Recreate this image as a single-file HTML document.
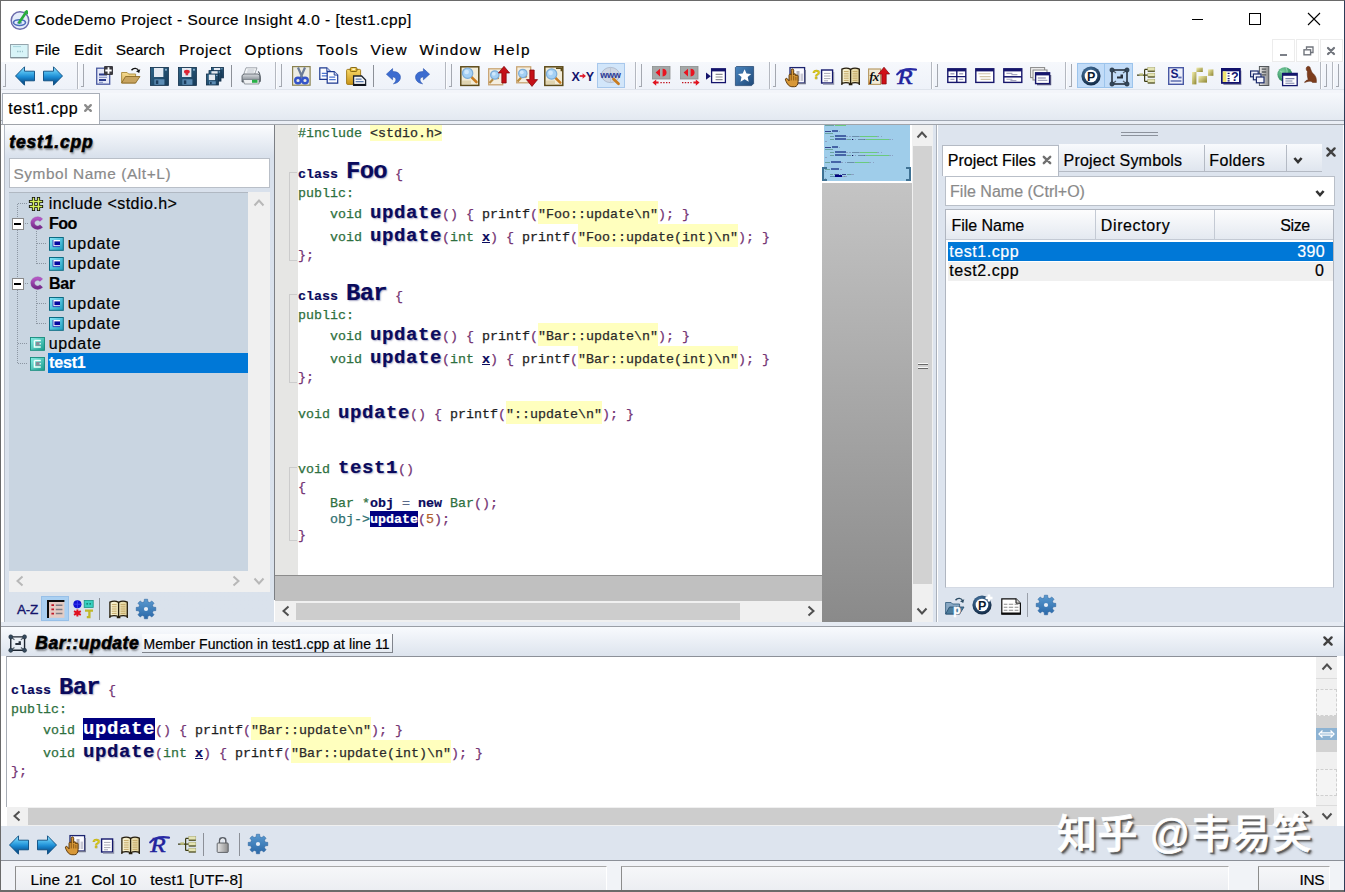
<!DOCTYPE html><html><head><meta charset="utf-8"><title>CodeDemo Project - Source Insight 4.0</title><style>
html,body{margin:0;padding:0;}
body{width:1345px;height:892px;overflow:hidden;position:relative;background:#dde4ee;font-family:"Liberation Sans",sans-serif;}
.r{position:absolute;box-sizing:border-box;}
.t{position:absolute;white-space:pre;-webkit-text-stroke:.2px currentColor;}
svg{position:absolute;overflow:visible;}
.c{position:absolute;white-space:pre;font-family:"Liberation Mono",monospace;font-size:13.33px;line-height:16px;height:16px;}
.c b{color:#0a0a5c;}
.g{color:#2e7040}.p{color:#703070}.k{color:#222}.s{color:#333;background:#ffffc4}
.n{color:#0a0a5c;font-weight:bold;text-shadow:1px 1px 1px rgba(0,0,60,.25)}
.u{text-decoration:underline;color:#0a0a5c}
</style></head><body>
<div class="r" style="left:0px;top:0px;width:1345px;height:892px;background:#fff;border:1px solid #6a6a6a;border-right-color:#2e3c58;"></div>
<div class="r" style="left:1px;top:1px;width:1343px;height:37px;background:#fff;"></div>
<span class="t" style="left:34.38px;top:10.00px;font-size:15.4px;line-height:20px;color:#000;letter-spacing:0.491px;">CodeDemo Project - Source Insight 4.0 - [test1.cpp]</span>
<div class="r" style="left:1192px;top:19px;width:11px;height:1px;background:#000;"></div>
<div class="r" style="left:1249px;top:13px;width:12px;height:12px;background:transparent;border:1px solid #000;"></div>
<svg style="left:1307px;top:12px" width="14" height="14" viewBox="0 0 14 14"><path d="M1 1L13 13M13 1L1 13" stroke="#000" stroke-width="1.1" fill="none"/></svg>
<span class="t" style="left:34.88px;top:40.30px;font-size:15.4px;line-height:20px;color:#000;letter-spacing:0.139px;">File</span>
<span class="t" style="left:73.88px;top:40.30px;font-size:15.4px;line-height:20px;color:#000;letter-spacing:0.565px;">Edit</span>
<span class="t" style="left:115.68px;top:40.30px;font-size:15.4px;line-height:20px;color:#000;letter-spacing:0.087px;">Search</span>
<span class="t" style="left:178.88px;top:40.30px;font-size:15.4px;line-height:20px;color:#000;letter-spacing:0.717px;">Project</span>
<span class="t" style="left:244.58px;top:40.30px;font-size:15.4px;line-height:20px;color:#000;letter-spacing:0.860px;">Options</span>
<span class="t" style="left:316.38px;top:40.30px;font-size:15.4px;line-height:20px;color:#000;letter-spacing:1.320px;">Tools</span>
<span class="t" style="left:370.38px;top:40.30px;font-size:15.4px;line-height:20px;color:#000;letter-spacing:1.044px;">View</span>
<span class="t" style="left:419.38px;top:40.30px;font-size:15.4px;line-height:20px;color:#000;letter-spacing:1.292px;">Window</span>
<span class="t" style="left:493.38px;top:40.30px;font-size:15.4px;line-height:20px;color:#000;letter-spacing:1.520px;">Help</span>
<div class="r" style="left:1272px;top:39px;width:23px;height:23px;background:#fff;border:1px solid #ececec;"></div>
<div class="r" style="left:1296px;top:39px;width:23px;height:23px;background:#fff;border:1px solid #ececec;"></div>
<div class="r" style="left:1320px;top:39px;width:23px;height:23px;background:#fff;border:1px solid #ececec;"></div>
<div class="r" style="left:1px;top:62px;width:1343px;height:27px;background:linear-gradient(#f6f8fc,#eef2f9);"></div>
<div class="r" style="left:1px;top:89px;width:1343px;height:1px;background:#dfe4ec;"></div>
<div class="r" style="left:1px;top:90px;width:1343px;height:3px;background:#f3f5fa;"></div>
<div class="r" style="left:1px;top:93px;width:1343px;height:27px;background:linear-gradient(#f6f8fc,#e3e9f1);"></div>
<div class="r" style="left:1px;top:120px;width:1343px;height:1px;background:#a0a7b2;"></div>
<div class="r" style="left:1px;top:121px;width:1343px;height:3px;background:#eaeef5;"></div>
<div class="r" style="left:1px;top:124px;width:1343px;height:1px;background:#a0a4aa;"></div>
<div class="r" style="left:2px;top:93px;width:98px;height:31px;background:#fff;border:1px solid #a8aeb8;border-bottom:none;"></div>
<span class="t" style="left:8.36px;top:98.30px;font-size:16px;line-height:21px;color:#000;letter-spacing:0.544px;">test1.cpp</span>
<div class="r" style="left:4px;top:125px;width:270px;height:497px;background:linear-gradient(#fbfcfe 0px,#d9e1ec 32px,#dae2ec 100%);border-left:1px solid #b4bac4;"></div>
<div class="r" style="left:274px;top:125px;width:1px;height:475px;background:#7c7f84;"></div>
<span class="t" style="left:9.30px;top:130.50px;font-size:17.5px;line-height:23px;color:#000;letter-spacing:0.821px;font-weight:bold;font-style:italic;text-shadow:1px 2px 2px rgba(0,0,0,.4);-webkit-text-stroke:.6px #000;">test1.cpp</span>
<div class="r" style="left:9px;top:158px;width:261px;height:30px;background:#fff;border:1px solid #b9bfc8;"></div>
<span class="t" style="left:13.38px;top:163.50px;font-size:15.4px;line-height:20px;color:#8a8a8a;letter-spacing:0.581px;">Symbol Name (Alt+L)</span>
<div class="r" style="left:9px;top:192px;width:239px;height:379px;background:#c9d5e1;border-top:1px solid #b0b8c2;"></div>
<div class="r" style="left:248px;top:192px;width:22px;height:400px;background:#f0f0f0;"></div>
<div class="r" style="left:9px;top:571px;width:239px;height:21px;background:#f0f0f0;"></div>
<div class="r" style="left:275px;top:125px;width:23px;height:451px;background:#e6e6e4;"></div>
<div class="r" style="left:298px;top:125px;width:524px;height:451px;background:#fff;"></div>
<div class="r" style="left:275px;top:575px;width:547px;height:1px;background:#8c8c8c;"></div>
<div class="r" style="left:275px;top:576px;width:547px;height:25px;background:#c0c0c0;"></div>
<div class="r" style="left:275px;top:601px;width:547px;height:21px;background:#f0f0f0;"></div>
<div class="r" style="left:296px;top:603px;width:444px;height:17px;background:#cdcdcd;"></div>
<div class="r" style="left:822px;top:125px;width:90px;height:497px;background:linear-gradient(#fff 0,#fff 58px,#c4c4c4 58px,#8a8a8a 100%);"></div>
<div class="r" style="left:824px;top:125px;width:86px;height:56px;background:#9fcdea;"></div>
<div class="r" style="left:912px;top:125px;width:21px;height:497px;background:#f0f0f0;"></div>
<div class="r" style="left:913px;top:146px;width:19px;height:438px;background:#d2d2d2;"></div>
<div class="r" style="left:933px;top:125px;width:4px;height:497px;background:#dde4ee;"></div>
<div class="r" style="left:936px;top:125px;width:1px;height:497px;background:#aab0ba;"></div>
<div class="r" style="left:938px;top:125px;width:405px;height:497px;background:#dde4ee;"></div>
<div class="r" style="left:945px;top:176px;width:390px;height:30px;background:#fff;border:1px solid #b9bfc8;"></div>
<div class="r" style="left:945px;top:209px;width:389px;height:379px;background:#fff;border:1px solid #b0b6c0;border-bottom-color:#d4dae4;"></div>
<div class="r" style="left:946px;top:210px;width:387px;height:30px;background:linear-gradient(#fdfdfe,#e4e9f0);border-bottom:1px solid #c4cad4;"></div>
<div class="r" style="left:948px;top:242px;width:385px;height:19px;background:#0078d7;"></div>
<div class="r" style="left:948px;top:262px;width:385px;height:19px;background:#f0f0f0;"></div>
<div class="r" style="left:1px;top:622px;width:1343px;height:4px;background:#e6ebf3;"></div>
<div class="r" style="left:1px;top:626px;width:1343px;height:1px;background:#9a9ea6;"></div>
<div class="r" style="left:1px;top:627px;width:1343px;height:29px;background:linear-gradient(#f8fafd,#dde4ee);"></div>
<div class="r" style="left:6px;top:656px;width:1310px;height:151px;background:#fff;border-top:1px solid #8c9098;border-left:1px solid #a8adb5;"></div>
<div class="r" style="left:1316px;top:656px;width:21px;height:170px;background:#f0f0f0;border-top:1px solid #8c9098;"></div>
<div class="r" style="left:1316px;top:678px;width:21px;height:1px;background:#dcdcdc;"></div>
<div class="r" style="left:1316px;top:805px;width:21px;height:1px;background:#dcdcdc;"></div>
<div class="r" style="left:7px;top:807px;width:1309px;height:19px;background:#f0f0f0;"></div>
<div class="r" style="left:28px;top:808px;width:1246px;height:17px;background:#cdcdcd;"></div>
<div class="r" style="left:1px;top:826px;width:1343px;height:34px;background:#dde4ee;"></div>
<div class="r" style="left:1px;top:860px;width:1343px;height:1px;background:#8c9098;"></div>
<div class="r" style="left:1px;top:861px;width:1343px;height:30px;background:#f1f3f7;"></div>
<span class="t" style="left:298.00px;top:125.00px;font-size:13.33px;line-height:17px;color:#2e7040;font-family:'Liberation Mono',monospace;-webkit-text-stroke:.25px currentColor;">#include</span>
<div class="r" style="left:370px;top:125px;width:72px;height:16px;background:#ffffbe;"></div>
<span class="t" style="left:370.00px;top:125.00px;font-size:13.33px;line-height:17px;color:#2a2a2a;font-family:'Liberation Mono',monospace;-webkit-text-stroke:.25px currentColor;">&lt;stdio.h&gt;</span>
<span class="t" style="left:298.00px;top:166.00px;font-size:13.33px;line-height:17px;color:#0a0a5c;font-weight:bold;font-family:'Liberation Mono',monospace;">class</span>
<span class="t" style="left:346.00px;top:156.00px;font-size:24.0px;line-height:31px;color:#0a0a5c;font-weight:bold;font-family:'Liberation Mono',monospace;letter-spacing:-0.730px;text-shadow:1px 1px 1.5px rgba(10,10,90,.35);">Foo</span>
<span class="t" style="left:395.01px;top:166.00px;font-size:13.33px;line-height:17px;color:#743474;font-family:'Liberation Mono',monospace;-webkit-text-stroke:.25px currentColor;">{</span>
<span class="t" style="left:298.00px;top:185.00px;font-size:13.33px;line-height:17px;color:#2e7040;font-family:'Liberation Mono',monospace;-webkit-text-stroke:.25px currentColor;">public:</span>
<span class="t" style="left:330.00px;top:206.00px;font-size:13.33px;line-height:17px;color:#2e7040;font-family:'Liberation Mono',monospace;-webkit-text-stroke:.25px currentColor;">void</span>
<span class="t" style="left:370.00px;top:200.50px;font-size:19.0px;line-height:25px;color:#0a0a5c;font-weight:bold;font-family:'Liberation Mono',monospace;letter-spacing:0.600px;text-shadow:1px 1px 1.5px rgba(10,10,90,.35);">update</span>
<span class="t" style="left:442.00px;top:206.00px;font-size:13.33px;line-height:17px;color:#743474;font-family:'Liberation Mono',monospace;-webkit-text-stroke:.25px currentColor;">()</span>
<span class="t" style="left:466.00px;top:206.00px;font-size:13.33px;line-height:17px;color:#743474;font-family:'Liberation Mono',monospace;-webkit-text-stroke:.25px currentColor;">{</span>
<span class="t" style="left:482.00px;top:206.00px;font-size:13.33px;line-height:17px;color:#1e1e1e;font-family:'Liberation Mono',monospace;-webkit-text-stroke:.25px currentColor;">printf</span>
<span class="t" style="left:530.00px;top:206.00px;font-size:13.33px;line-height:17px;color:#743474;font-family:'Liberation Mono',monospace;-webkit-text-stroke:.25px currentColor;">(</span>
<div class="r" style="left:538px;top:201px;width:120px;height:23px;background:#ffffbe;"></div>
<span class="t" style="left:538.00px;top:206.00px;font-size:13.33px;line-height:17px;color:#2a2a2a;font-family:'Liberation Mono',monospace;-webkit-text-stroke:.25px currentColor;">"Foo::update\n"</span>
<span class="t" style="left:658.00px;top:206.00px;font-size:13.33px;line-height:17px;color:#743474;font-family:'Liberation Mono',monospace;-webkit-text-stroke:.25px currentColor;">);</span>
<span class="t" style="left:682.00px;top:206.00px;font-size:13.33px;line-height:17px;color:#743474;font-family:'Liberation Mono',monospace;-webkit-text-stroke:.25px currentColor;">}</span>
<span class="t" style="left:330.00px;top:229.00px;font-size:13.33px;line-height:17px;color:#2e7040;font-family:'Liberation Mono',monospace;-webkit-text-stroke:.25px currentColor;">void</span>
<span class="t" style="left:370.00px;top:223.50px;font-size:19.0px;line-height:25px;color:#0a0a5c;font-weight:bold;font-family:'Liberation Mono',monospace;letter-spacing:0.600px;text-shadow:1px 1px 1.5px rgba(10,10,90,.35);">update</span>
<span class="t" style="left:442.00px;top:229.00px;font-size:13.33px;line-height:17px;color:#743474;font-family:'Liberation Mono',monospace;-webkit-text-stroke:.25px currentColor;">(</span>
<span class="t" style="left:450.00px;top:229.00px;font-size:13.33px;line-height:17px;color:#2e7040;font-family:'Liberation Mono',monospace;-webkit-text-stroke:.25px currentColor;">int</span>
<span class="t" style="left:482.00px;top:229.00px;font-size:13.33px;line-height:17px;color:#0a0a5c;font-weight:bold;font-family:'Liberation Mono',monospace;text-decoration:underline;">x</span>
<span class="t" style="left:490.00px;top:229.00px;font-size:13.33px;line-height:17px;color:#743474;font-family:'Liberation Mono',monospace;-webkit-text-stroke:.25px currentColor;">)</span>
<span class="t" style="left:506.00px;top:229.00px;font-size:13.33px;line-height:17px;color:#743474;font-family:'Liberation Mono',monospace;-webkit-text-stroke:.25px currentColor;">{</span>
<span class="t" style="left:522.00px;top:229.00px;font-size:13.33px;line-height:17px;color:#1e1e1e;font-family:'Liberation Mono',monospace;-webkit-text-stroke:.25px currentColor;">printf</span>
<span class="t" style="left:570.00px;top:229.00px;font-size:13.33px;line-height:17px;color:#743474;font-family:'Liberation Mono',monospace;-webkit-text-stroke:.25px currentColor;">(</span>
<div class="r" style="left:578px;top:224px;width:160px;height:23px;background:#ffffbe;"></div>
<span class="t" style="left:578.00px;top:229.00px;font-size:13.33px;line-height:17px;color:#2a2a2a;font-family:'Liberation Mono',monospace;-webkit-text-stroke:.25px currentColor;">"Foo::update(int)\n"</span>
<span class="t" style="left:738.00px;top:229.00px;font-size:13.33px;line-height:17px;color:#743474;font-family:'Liberation Mono',monospace;-webkit-text-stroke:.25px currentColor;">);</span>
<span class="t" style="left:762.00px;top:229.00px;font-size:13.33px;line-height:17px;color:#743474;font-family:'Liberation Mono',monospace;-webkit-text-stroke:.25px currentColor;">}</span>
<span class="t" style="left:298.00px;top:247.00px;font-size:13.33px;line-height:17px;color:#743474;font-family:'Liberation Mono',monospace;-webkit-text-stroke:.25px currentColor;">};</span>
<span class="t" style="left:298.00px;top:288.00px;font-size:13.33px;line-height:17px;color:#0a0a5c;font-weight:bold;font-family:'Liberation Mono',monospace;">class</span>
<span class="t" style="left:346.00px;top:278.00px;font-size:24.0px;line-height:31px;color:#0a0a5c;font-weight:bold;font-family:'Liberation Mono',monospace;letter-spacing:-0.730px;text-shadow:1px 1px 1.5px rgba(10,10,90,.35);">Bar</span>
<span class="t" style="left:395.01px;top:288.00px;font-size:13.33px;line-height:17px;color:#743474;font-family:'Liberation Mono',monospace;-webkit-text-stroke:.25px currentColor;">{</span>
<span class="t" style="left:298.00px;top:307.00px;font-size:13.33px;line-height:17px;color:#2e7040;font-family:'Liberation Mono',monospace;-webkit-text-stroke:.25px currentColor;">public:</span>
<span class="t" style="left:330.00px;top:328.00px;font-size:13.33px;line-height:17px;color:#2e7040;font-family:'Liberation Mono',monospace;-webkit-text-stroke:.25px currentColor;">void</span>
<span class="t" style="left:370.00px;top:322.50px;font-size:19.0px;line-height:25px;color:#0a0a5c;font-weight:bold;font-family:'Liberation Mono',monospace;letter-spacing:0.600px;text-shadow:1px 1px 1.5px rgba(10,10,90,.35);">update</span>
<span class="t" style="left:442.00px;top:328.00px;font-size:13.33px;line-height:17px;color:#743474;font-family:'Liberation Mono',monospace;-webkit-text-stroke:.25px currentColor;">()</span>
<span class="t" style="left:466.00px;top:328.00px;font-size:13.33px;line-height:17px;color:#743474;font-family:'Liberation Mono',monospace;-webkit-text-stroke:.25px currentColor;">{</span>
<span class="t" style="left:482.00px;top:328.00px;font-size:13.33px;line-height:17px;color:#1e1e1e;font-family:'Liberation Mono',monospace;-webkit-text-stroke:.25px currentColor;">printf</span>
<span class="t" style="left:530.00px;top:328.00px;font-size:13.33px;line-height:17px;color:#743474;font-family:'Liberation Mono',monospace;-webkit-text-stroke:.25px currentColor;">(</span>
<div class="r" style="left:538px;top:323px;width:120px;height:23px;background:#ffffbe;"></div>
<span class="t" style="left:538.00px;top:328.00px;font-size:13.33px;line-height:17px;color:#2a2a2a;font-family:'Liberation Mono',monospace;-webkit-text-stroke:.25px currentColor;">"Bar::update\n"</span>
<span class="t" style="left:658.00px;top:328.00px;font-size:13.33px;line-height:17px;color:#743474;font-family:'Liberation Mono',monospace;-webkit-text-stroke:.25px currentColor;">);</span>
<span class="t" style="left:682.00px;top:328.00px;font-size:13.33px;line-height:17px;color:#743474;font-family:'Liberation Mono',monospace;-webkit-text-stroke:.25px currentColor;">}</span>
<span class="t" style="left:330.00px;top:351.00px;font-size:13.33px;line-height:17px;color:#2e7040;font-family:'Liberation Mono',monospace;-webkit-text-stroke:.25px currentColor;">void</span>
<span class="t" style="left:370.00px;top:345.50px;font-size:19.0px;line-height:25px;color:#0a0a5c;font-weight:bold;font-family:'Liberation Mono',monospace;letter-spacing:0.600px;text-shadow:1px 1px 1.5px rgba(10,10,90,.35);">update</span>
<span class="t" style="left:442.00px;top:351.00px;font-size:13.33px;line-height:17px;color:#743474;font-family:'Liberation Mono',monospace;-webkit-text-stroke:.25px currentColor;">(</span>
<span class="t" style="left:450.00px;top:351.00px;font-size:13.33px;line-height:17px;color:#2e7040;font-family:'Liberation Mono',monospace;-webkit-text-stroke:.25px currentColor;">int</span>
<span class="t" style="left:482.00px;top:351.00px;font-size:13.33px;line-height:17px;color:#0a0a5c;font-weight:bold;font-family:'Liberation Mono',monospace;text-decoration:underline;">x</span>
<span class="t" style="left:490.00px;top:351.00px;font-size:13.33px;line-height:17px;color:#743474;font-family:'Liberation Mono',monospace;-webkit-text-stroke:.25px currentColor;">)</span>
<span class="t" style="left:506.00px;top:351.00px;font-size:13.33px;line-height:17px;color:#743474;font-family:'Liberation Mono',monospace;-webkit-text-stroke:.25px currentColor;">{</span>
<span class="t" style="left:522.00px;top:351.00px;font-size:13.33px;line-height:17px;color:#1e1e1e;font-family:'Liberation Mono',monospace;-webkit-text-stroke:.25px currentColor;">printf</span>
<span class="t" style="left:570.00px;top:351.00px;font-size:13.33px;line-height:17px;color:#743474;font-family:'Liberation Mono',monospace;-webkit-text-stroke:.25px currentColor;">(</span>
<div class="r" style="left:578px;top:346px;width:160px;height:23px;background:#ffffbe;"></div>
<span class="t" style="left:578.00px;top:351.00px;font-size:13.33px;line-height:17px;color:#2a2a2a;font-family:'Liberation Mono',monospace;-webkit-text-stroke:.25px currentColor;">"Bar::update(int)\n"</span>
<span class="t" style="left:738.00px;top:351.00px;font-size:13.33px;line-height:17px;color:#743474;font-family:'Liberation Mono',monospace;-webkit-text-stroke:.25px currentColor;">);</span>
<span class="t" style="left:762.00px;top:351.00px;font-size:13.33px;line-height:17px;color:#743474;font-family:'Liberation Mono',monospace;-webkit-text-stroke:.25px currentColor;">}</span>
<span class="t" style="left:298.00px;top:369.00px;font-size:13.33px;line-height:17px;color:#743474;font-family:'Liberation Mono',monospace;-webkit-text-stroke:.25px currentColor;">};</span>
<span class="t" style="left:298.00px;top:406.00px;font-size:13.33px;line-height:17px;color:#2e7040;font-family:'Liberation Mono',monospace;-webkit-text-stroke:.25px currentColor;">void</span>
<span class="t" style="left:338.00px;top:400.50px;font-size:19.0px;line-height:25px;color:#0a0a5c;font-weight:bold;font-family:'Liberation Mono',monospace;letter-spacing:0.600px;text-shadow:1px 1px 1.5px rgba(10,10,90,.35);">update</span>
<span class="t" style="left:410.00px;top:406.00px;font-size:13.33px;line-height:17px;color:#743474;font-family:'Liberation Mono',monospace;-webkit-text-stroke:.25px currentColor;">()</span>
<span class="t" style="left:434.00px;top:406.00px;font-size:13.33px;line-height:17px;color:#743474;font-family:'Liberation Mono',monospace;-webkit-text-stroke:.25px currentColor;">{</span>
<span class="t" style="left:450.00px;top:406.00px;font-size:13.33px;line-height:17px;color:#1e1e1e;font-family:'Liberation Mono',monospace;-webkit-text-stroke:.25px currentColor;">printf</span>
<span class="t" style="left:498.00px;top:406.00px;font-size:13.33px;line-height:17px;color:#743474;font-family:'Liberation Mono',monospace;-webkit-text-stroke:.25px currentColor;">(</span>
<div class="r" style="left:506px;top:401px;width:96px;height:23px;background:#ffffbe;"></div>
<span class="t" style="left:506.00px;top:406.00px;font-size:13.33px;line-height:17px;color:#2a2a2a;font-family:'Liberation Mono',monospace;-webkit-text-stroke:.25px currentColor;">"::update\n"</span>
<span class="t" style="left:602.00px;top:406.00px;font-size:13.33px;line-height:17px;color:#743474;font-family:'Liberation Mono',monospace;-webkit-text-stroke:.25px currentColor;">);</span>
<span class="t" style="left:626.00px;top:406.00px;font-size:13.33px;line-height:17px;color:#743474;font-family:'Liberation Mono',monospace;-webkit-text-stroke:.25px currentColor;">}</span>
<span class="t" style="left:298.00px;top:461.00px;font-size:13.33px;line-height:17px;color:#2e7040;font-family:'Liberation Mono',monospace;-webkit-text-stroke:.25px currentColor;">void</span>
<span class="t" style="left:338.00px;top:455.50px;font-size:19.0px;line-height:25px;color:#0a0a5c;font-weight:bold;font-family:'Liberation Mono',monospace;letter-spacing:0.600px;text-shadow:1px 1px 1.5px rgba(10,10,90,.35);">test1</span>
<span class="t" style="left:398.00px;top:461.00px;font-size:13.33px;line-height:17px;color:#743474;font-family:'Liberation Mono',monospace;-webkit-text-stroke:.25px currentColor;">()</span>
<span class="t" style="left:298.00px;top:479.00px;font-size:13.33px;line-height:17px;color:#743474;font-family:'Liberation Mono',monospace;-webkit-text-stroke:.25px currentColor;">{</span>
<span class="t" style="left:330.00px;top:495.00px;font-size:13.33px;line-height:17px;color:#2e7040;font-family:'Liberation Mono',monospace;-webkit-text-stroke:.25px currentColor;">Bar</span>
<span class="t" style="left:362.00px;top:495.00px;font-size:13.33px;line-height:17px;color:#2e7040;font-family:'Liberation Mono',monospace;-webkit-text-stroke:.25px currentColor;">*</span>
<span class="t" style="left:370.00px;top:495.00px;font-size:13.33px;line-height:17px;color:#0a0a5c;font-weight:bold;font-family:'Liberation Mono',monospace;">obj</span>
<span class="t" style="left:402.00px;top:495.00px;font-size:13.33px;line-height:17px;color:#5a6a8a;font-family:'Liberation Mono',monospace;-webkit-text-stroke:.25px currentColor;">=</span>
<span class="t" style="left:418.00px;top:495.00px;font-size:13.33px;line-height:17px;color:#0a0a5c;font-weight:bold;font-family:'Liberation Mono',monospace;">new</span>
<span class="t" style="left:450.00px;top:495.00px;font-size:13.33px;line-height:17px;color:#2e7040;font-family:'Liberation Mono',monospace;-webkit-text-stroke:.25px currentColor;">Bar</span>
<span class="t" style="left:474.00px;top:495.00px;font-size:13.33px;line-height:17px;color:#743474;font-family:'Liberation Mono',monospace;-webkit-text-stroke:.25px currentColor;">();</span>
<span class="t" style="left:330.00px;top:511.00px;font-size:13.33px;line-height:17px;color:#2e7070;font-family:'Liberation Mono',monospace;-webkit-text-stroke:.25px currentColor;">obj-&gt;</span>
<div class="r" style="left:370px;top:511px;width:48px;height:16px;background:#000080;"></div>
<span class="t" style="left:370.00px;top:511.00px;font-size:13.33px;line-height:17px;color:#fff;font-weight:bold;font-family:'Liberation Mono',monospace;">update</span>
<span class="t" style="left:418.00px;top:511.00px;font-size:13.33px;line-height:17px;color:#743474;font-family:'Liberation Mono',monospace;-webkit-text-stroke:.25px currentColor;">(</span>
<span class="t" style="left:426.00px;top:511.00px;font-size:13.33px;line-height:17px;color:#b0602a;font-family:'Liberation Mono',monospace;-webkit-text-stroke:.25px currentColor;">5</span>
<span class="t" style="left:434.00px;top:511.00px;font-size:13.33px;line-height:17px;color:#743474;font-family:'Liberation Mono',monospace;-webkit-text-stroke:.25px currentColor;">);</span>
<span class="t" style="left:298.00px;top:527.00px;font-size:13.33px;line-height:17px;color:#743474;font-family:'Liberation Mono',monospace;-webkit-text-stroke:.25px currentColor;">}</span>
<div class="r" style="left:825.0px;top:125.2px;width:9.3px;height:1px;background:rgba(40,110,70,.45);"></div>
<div class="r" style="left:835.4px;top:125.2px;width:10.4px;height:1px;background:rgba(90,200,90,.75);"></div>
<div class="r" style="left:825.0px;top:130.6px;width:5.8px;height:1px;background:rgba(10,10,100,.7);"></div>
<div class="r" style="left:832.0px;top:129.6px;width:5.9px;height:2px;background:rgba(10,30,120,.6);"></div>
<div class="r" style="left:839.1px;top:130.6px;width:1.2px;height:1px;background:rgba(90,60,110,.3);"></div>
<div class="r" style="left:825.0px;top:133.0px;width:8.1px;height:1px;background:rgba(40,110,70,.45);"></div>
<div class="r" style="left:829.6px;top:135.8px;width:4.6px;height:1px;background:rgba(40,110,70,.45);"></div>
<div class="r" style="left:835.4px;top:134.8px;width:10.4px;height:2px;background:rgba(10,30,120,.6);"></div>
<div class="r" style="left:845.9px;top:135.8px;width:2.3px;height:1px;background:rgba(90,60,110,.3);"></div>
<div class="r" style="left:849.4px;top:135.8px;width:1.2px;height:1px;background:rgba(90,60,110,.3);"></div>
<div class="r" style="left:851.7px;top:135.8px;width:7.0px;height:1px;background:rgba(30,50,80,.4);"></div>
<div class="r" style="left:858.6px;top:135.8px;width:1.2px;height:1px;background:rgba(90,60,110,.3);"></div>
<div class="r" style="left:859.8px;top:135.8px;width:17.4px;height:1px;background:rgba(90,200,90,.75);"></div>
<div class="r" style="left:877.2px;top:135.8px;width:2.3px;height:1px;background:rgba(90,60,110,.3);"></div>
<div class="r" style="left:880.7px;top:135.8px;width:1.2px;height:1px;background:rgba(90,60,110,.3);"></div>
<div class="r" style="left:829.6px;top:138.8px;width:4.6px;height:1px;background:rgba(40,110,70,.45);"></div>
<div class="r" style="left:835.4px;top:137.8px;width:10.4px;height:2px;background:rgba(10,30,120,.6);"></div>
<div class="r" style="left:845.9px;top:138.8px;width:1.2px;height:1px;background:rgba(90,60,110,.3);"></div>
<div class="r" style="left:847.0px;top:138.8px;width:3.5px;height:1px;background:rgba(40,110,70,.45);"></div>
<div class="r" style="left:851.7px;top:138.8px;width:1.2px;height:1px;background:#0a0a5c;"></div>
<div class="r" style="left:852.8px;top:138.8px;width:1.2px;height:1px;background:rgba(90,60,110,.3);"></div>
<div class="r" style="left:855.2px;top:138.8px;width:1.2px;height:1px;background:rgba(90,60,110,.3);"></div>
<div class="r" style="left:857.5px;top:138.8px;width:7.0px;height:1px;background:rgba(30,50,80,.4);"></div>
<div class="r" style="left:864.4px;top:138.8px;width:1.2px;height:1px;background:rgba(90,60,110,.3);"></div>
<div class="r" style="left:865.6px;top:138.8px;width:23.2px;height:1px;background:rgba(90,200,90,.75);"></div>
<div class="r" style="left:888.8px;top:138.8px;width:2.3px;height:1px;background:rgba(90,60,110,.3);"></div>
<div class="r" style="left:892.3px;top:138.8px;width:1.2px;height:1px;background:rgba(90,60,110,.3);"></div>
<div class="r" style="left:825.0px;top:141.1px;width:2.3px;height:1px;background:rgba(90,60,110,.3);"></div>
<div class="r" style="left:825.0px;top:146.5px;width:5.8px;height:1px;background:rgba(10,10,100,.7);"></div>
<div class="r" style="left:832.0px;top:145.5px;width:5.9px;height:2px;background:rgba(10,30,120,.6);"></div>
<div class="r" style="left:839.1px;top:146.5px;width:1.2px;height:1px;background:rgba(90,60,110,.3);"></div>
<div class="r" style="left:825.0px;top:149.0px;width:8.1px;height:1px;background:rgba(40,110,70,.45);"></div>
<div class="r" style="left:829.6px;top:151.7px;width:4.6px;height:1px;background:rgba(40,110,70,.45);"></div>
<div class="r" style="left:835.4px;top:150.7px;width:10.4px;height:2px;background:rgba(10,30,120,.6);"></div>
<div class="r" style="left:845.9px;top:151.7px;width:2.3px;height:1px;background:rgba(90,60,110,.3);"></div>
<div class="r" style="left:849.4px;top:151.7px;width:1.2px;height:1px;background:rgba(90,60,110,.3);"></div>
<div class="r" style="left:851.7px;top:151.7px;width:7.0px;height:1px;background:rgba(30,50,80,.4);"></div>
<div class="r" style="left:858.6px;top:151.7px;width:1.2px;height:1px;background:rgba(90,60,110,.3);"></div>
<div class="r" style="left:859.8px;top:151.7px;width:17.4px;height:1px;background:rgba(90,200,90,.75);"></div>
<div class="r" style="left:877.2px;top:151.7px;width:2.3px;height:1px;background:rgba(90,60,110,.3);"></div>
<div class="r" style="left:880.7px;top:151.7px;width:1.2px;height:1px;background:rgba(90,60,110,.3);"></div>
<div class="r" style="left:829.6px;top:154.7px;width:4.6px;height:1px;background:rgba(40,110,70,.45);"></div>
<div class="r" style="left:835.4px;top:153.7px;width:10.4px;height:2px;background:rgba(10,30,120,.6);"></div>
<div class="r" style="left:845.9px;top:154.7px;width:1.2px;height:1px;background:rgba(90,60,110,.3);"></div>
<div class="r" style="left:847.0px;top:154.7px;width:3.5px;height:1px;background:rgba(40,110,70,.45);"></div>
<div class="r" style="left:851.7px;top:154.7px;width:1.2px;height:1px;background:#0a0a5c;"></div>
<div class="r" style="left:852.8px;top:154.7px;width:1.2px;height:1px;background:rgba(90,60,110,.3);"></div>
<div class="r" style="left:855.2px;top:154.7px;width:1.2px;height:1px;background:rgba(90,60,110,.3);"></div>
<div class="r" style="left:857.5px;top:154.7px;width:7.0px;height:1px;background:rgba(30,50,80,.4);"></div>
<div class="r" style="left:864.4px;top:154.7px;width:1.2px;height:1px;background:rgba(90,60,110,.3);"></div>
<div class="r" style="left:865.6px;top:154.7px;width:23.2px;height:1px;background:rgba(90,200,90,.75);"></div>
<div class="r" style="left:888.8px;top:154.7px;width:2.3px;height:1px;background:rgba(90,60,110,.3);"></div>
<div class="r" style="left:892.3px;top:154.7px;width:1.2px;height:1px;background:rgba(90,60,110,.3);"></div>
<div class="r" style="left:825.0px;top:157.1px;width:2.3px;height:1px;background:rgba(90,60,110,.3);"></div>
<div class="r" style="left:825.0px;top:161.9px;width:4.6px;height:1px;background:rgba(40,110,70,.45);"></div>
<div class="r" style="left:830.8px;top:160.9px;width:10.4px;height:2px;background:rgba(10,30,120,.6);"></div>
<div class="r" style="left:841.2px;top:161.9px;width:2.3px;height:1px;background:rgba(90,60,110,.3);"></div>
<div class="r" style="left:844.7px;top:161.9px;width:1.2px;height:1px;background:rgba(90,60,110,.3);"></div>
<div class="r" style="left:847.0px;top:161.9px;width:7.0px;height:1px;background:rgba(30,50,80,.4);"></div>
<div class="r" style="left:854.0px;top:161.9px;width:1.2px;height:1px;background:rgba(90,60,110,.3);"></div>
<div class="r" style="left:855.2px;top:161.9px;width:13.9px;height:1px;background:rgba(90,200,90,.75);"></div>
<div class="r" style="left:869.1px;top:161.9px;width:2.3px;height:1px;background:rgba(90,60,110,.3);"></div>
<div class="r" style="left:872.6px;top:161.9px;width:1.2px;height:1px;background:rgba(90,60,110,.3);"></div>
<div class="r" style="left:825.0px;top:169.1px;width:4.6px;height:1px;background:rgba(40,110,70,.45);"></div>
<div class="r" style="left:830.8px;top:168.1px;width:8.7px;height:2px;background:rgba(10,30,120,.6);"></div>
<div class="r" style="left:839.5px;top:169.1px;width:2.3px;height:1px;background:rgba(90,60,110,.3);"></div>
<div class="r" style="left:825.0px;top:171.4px;width:1.2px;height:1px;background:rgba(90,60,110,.3);"></div>
<div class="r" style="left:829.6px;top:173.5px;width:3.5px;height:1px;background:rgba(40,110,70,.45);"></div>
<div class="r" style="left:834.3px;top:173.5px;width:1.2px;height:1px;background:rgba(40,110,70,.45);"></div>
<div class="r" style="left:835.4px;top:173.5px;width:3.5px;height:1px;background:rgba(10,10,100,.7);"></div>
<div class="r" style="left:840.1px;top:173.5px;width:1.2px;height:1px;background:rgba(60,80,110,.4);"></div>
<div class="r" style="left:842.4px;top:173.5px;width:3.5px;height:1px;background:rgba(10,10,100,.7);"></div>
<div class="r" style="left:847.0px;top:173.5px;width:3.5px;height:1px;background:rgba(40,110,70,.45);"></div>
<div class="r" style="left:850.5px;top:173.5px;width:3.5px;height:1px;background:rgba(90,60,110,.3);"></div>
<div class="r" style="left:829.6px;top:175.6px;width:5.8px;height:1px;background:rgba(30,80,110,.5);"></div>
<div class="r" style="left:835.4px;top:174.6px;width:7.0px;height:2px;background:#000080;"></div>
<div class="r" style="left:842.4px;top:175.6px;width:1.2px;height:1px;background:rgba(90,60,110,.3);"></div>
<div class="r" style="left:843.6px;top:175.6px;width:1.2px;height:1px;background:rgba(120,80,60,.5);"></div>
<div class="r" style="left:844.7px;top:175.6px;width:2.3px;height:1px;background:rgba(90,60,110,.3);"></div>
<div class="r" style="left:825.0px;top:177.7px;width:1.2px;height:1px;background:rgba(90,60,110,.3);"></div>
<div class="r" style="left:289px;top:172px;width:1px;height:88px;background:#cccccc;"></div>
<div class="r" style="left:289px;top:172px;width:8px;height:1px;background:#cccccc;"></div>
<div class="r" style="left:289px;top:260px;width:8px;height:1px;background:#cccccc;"></div>
<div class="r" style="left:289px;top:294px;width:1px;height:88px;background:#cccccc;"></div>
<div class="r" style="left:289px;top:294px;width:8px;height:1px;background:#cccccc;"></div>
<div class="r" style="left:289px;top:382px;width:8px;height:1px;background:#cccccc;"></div>
<div class="r" style="left:289px;top:467px;width:1px;height:73px;background:#cccccc;"></div>
<div class="r" style="left:289px;top:467px;width:8px;height:1px;background:#cccccc;"></div>
<div class="r" style="left:289px;top:540px;width:8px;height:1px;background:#cccccc;"></div>
<span class="t" style="left:11.00px;top:682.00px;font-size:13.33px;line-height:17px;color:#0a0a5c;font-weight:bold;font-family:'Liberation Mono',monospace;">class</span>
<span class="t" style="left:59.00px;top:672.00px;font-size:24.0px;line-height:31px;color:#0a0a5c;font-weight:bold;font-family:'Liberation Mono',monospace;letter-spacing:-0.730px;text-shadow:1px 1px 1.5px rgba(10,10,90,.35);">Bar</span>
<span class="t" style="left:108.01px;top:682.00px;font-size:13.33px;line-height:17px;color:#743474;font-family:'Liberation Mono',monospace;-webkit-text-stroke:.25px currentColor;">{</span>
<span class="t" style="left:11.00px;top:701.00px;font-size:13.33px;line-height:17px;color:#2e7040;font-family:'Liberation Mono',monospace;-webkit-text-stroke:.25px currentColor;">public:</span>
<span class="t" style="left:43.00px;top:722.00px;font-size:13.33px;line-height:17px;color:#2e7040;font-family:'Liberation Mono',monospace;-webkit-text-stroke:.25px currentColor;">void</span>
<div class="r" style="left:83px;top:718px;width:72px;height:22px;background:#000080;"></div>
<span class="t" style="left:83.00px;top:716.50px;font-size:19.0px;line-height:25px;color:#fff;font-weight:bold;font-family:'Liberation Mono',monospace;letter-spacing:0.600px;">update</span>
<span class="t" style="left:155.00px;top:722.00px;font-size:13.33px;line-height:17px;color:#743474;font-family:'Liberation Mono',monospace;-webkit-text-stroke:.25px currentColor;">()</span>
<span class="t" style="left:179.00px;top:722.00px;font-size:13.33px;line-height:17px;color:#743474;font-family:'Liberation Mono',monospace;-webkit-text-stroke:.25px currentColor;">{</span>
<span class="t" style="left:195.00px;top:722.00px;font-size:13.33px;line-height:17px;color:#1e1e1e;font-family:'Liberation Mono',monospace;-webkit-text-stroke:.25px currentColor;">printf</span>
<span class="t" style="left:243.00px;top:722.00px;font-size:13.33px;line-height:17px;color:#743474;font-family:'Liberation Mono',monospace;-webkit-text-stroke:.25px currentColor;">(</span>
<div class="r" style="left:251px;top:717px;width:120px;height:23px;background:#ffffbe;"></div>
<span class="t" style="left:251.00px;top:722.00px;font-size:13.33px;line-height:17px;color:#2a2a2a;font-family:'Liberation Mono',monospace;-webkit-text-stroke:.25px currentColor;">"Bar::update\n"</span>
<span class="t" style="left:371.00px;top:722.00px;font-size:13.33px;line-height:17px;color:#743474;font-family:'Liberation Mono',monospace;-webkit-text-stroke:.25px currentColor;">);</span>
<span class="t" style="left:395.00px;top:722.00px;font-size:13.33px;line-height:17px;color:#743474;font-family:'Liberation Mono',monospace;-webkit-text-stroke:.25px currentColor;">}</span>
<span class="t" style="left:43.00px;top:745.00px;font-size:13.33px;line-height:17px;color:#2e7040;font-family:'Liberation Mono',monospace;-webkit-text-stroke:.25px currentColor;">void</span>
<span class="t" style="left:83.00px;top:739.50px;font-size:19.0px;line-height:25px;color:#0a0a5c;font-weight:bold;font-family:'Liberation Mono',monospace;letter-spacing:0.600px;text-shadow:1px 1px 1.5px rgba(10,10,90,.35);">update</span>
<span class="t" style="left:155.00px;top:745.00px;font-size:13.33px;line-height:17px;color:#743474;font-family:'Liberation Mono',monospace;-webkit-text-stroke:.25px currentColor;">(</span>
<span class="t" style="left:163.00px;top:745.00px;font-size:13.33px;line-height:17px;color:#2e7040;font-family:'Liberation Mono',monospace;-webkit-text-stroke:.25px currentColor;">int</span>
<span class="t" style="left:195.00px;top:745.00px;font-size:13.33px;line-height:17px;color:#0a0a5c;font-weight:bold;font-family:'Liberation Mono',monospace;text-decoration:underline;">x</span>
<span class="t" style="left:203.00px;top:745.00px;font-size:13.33px;line-height:17px;color:#743474;font-family:'Liberation Mono',monospace;-webkit-text-stroke:.25px currentColor;">)</span>
<span class="t" style="left:219.00px;top:745.00px;font-size:13.33px;line-height:17px;color:#743474;font-family:'Liberation Mono',monospace;-webkit-text-stroke:.25px currentColor;">{</span>
<span class="t" style="left:235.00px;top:745.00px;font-size:13.33px;line-height:17px;color:#1e1e1e;font-family:'Liberation Mono',monospace;-webkit-text-stroke:.25px currentColor;">printf</span>
<span class="t" style="left:283.00px;top:745.00px;font-size:13.33px;line-height:17px;color:#743474;font-family:'Liberation Mono',monospace;-webkit-text-stroke:.25px currentColor;">(</span>
<div class="r" style="left:291px;top:740px;width:160px;height:23px;background:#ffffbe;"></div>
<span class="t" style="left:291.00px;top:745.00px;font-size:13.33px;line-height:17px;color:#2a2a2a;font-family:'Liberation Mono',monospace;-webkit-text-stroke:.25px currentColor;">"Bar::update(int)\n"</span>
<span class="t" style="left:451.00px;top:745.00px;font-size:13.33px;line-height:17px;color:#743474;font-family:'Liberation Mono',monospace;-webkit-text-stroke:.25px currentColor;">);</span>
<span class="t" style="left:475.00px;top:745.00px;font-size:13.33px;line-height:17px;color:#743474;font-family:'Liberation Mono',monospace;-webkit-text-stroke:.25px currentColor;">}</span>
<span class="t" style="left:11.00px;top:763.00px;font-size:13.33px;line-height:17px;color:#743474;font-family:'Liberation Mono',monospace;-webkit-text-stroke:.25px currentColor;">};</span>
<div class="r" style="left:48px;top:353px;width:200px;height:20px;background:#0078d7;"></div>
<span class="t" style="left:48.66px;top:192.50px;font-size:16px;line-height:21px;color:#000;letter-spacing:0.456px;">include &lt;stdio.h&gt;</span>
<span class="t" style="left:48.96px;top:212.50px;font-size:16px;line-height:21px;color:#000;letter-spacing:-0.520px;font-weight:bold;">Foo</span>
<span class="t" style="left:67.76px;top:232.50px;font-size:16px;line-height:21px;color:#000;letter-spacing:0.668px;">update</span>
<span class="t" style="left:67.76px;top:252.50px;font-size:16px;line-height:21px;color:#000;letter-spacing:0.668px;">update</span>
<span class="t" style="left:48.96px;top:272.50px;font-size:16px;line-height:21px;color:#000;letter-spacing:-0.200px;font-weight:bold;">Bar</span>
<span class="t" style="left:67.76px;top:292.50px;font-size:16px;line-height:21px;color:#000;letter-spacing:0.668px;">update</span>
<span class="t" style="left:67.76px;top:312.50px;font-size:16px;line-height:21px;color:#000;letter-spacing:0.668px;">update</span>
<span class="t" style="left:48.66px;top:332.50px;font-size:16px;line-height:21px;color:#000;letter-spacing:0.668px;">update</span>
<span class="t" style="left:48.96px;top:352.00px;font-size:16px;line-height:21px;color:#fff;letter-spacing:-0.143px;font-weight:bold;">test1</span>
<div class="r" style="left:17px;top:203px;width:1px;height:160px;background:repeating-linear-gradient(0deg,#8c96a2 0 1px,transparent 1px 2px);"></div>
<div class="r" style="left:18px;top:203px;width:10px;height:1px;background:repeating-linear-gradient(90deg,#8c96a2 0 1px,transparent 1px 2px);"></div>
<div class="r" style="left:18px;top:343px;width:10px;height:1px;background:repeating-linear-gradient(90deg,#8c96a2 0 1px,transparent 1px 2px);"></div>
<div class="r" style="left:18px;top:363px;width:10px;height:1px;background:repeating-linear-gradient(90deg,#8c96a2 0 1px,transparent 1px 2px);"></div>
<div class="r" style="left:36px;top:230px;width:1px;height:34px;background:repeating-linear-gradient(0deg,#8c96a2 0 1px,transparent 1px 2px);"></div>
<div class="r" style="left:37px;top:243px;width:10px;height:1px;background:repeating-linear-gradient(90deg,#8c96a2 0 1px,transparent 1px 2px);"></div>
<div class="r" style="left:37px;top:263px;width:10px;height:1px;background:repeating-linear-gradient(90deg,#8c96a2 0 1px,transparent 1px 2px);"></div>
<div class="r" style="left:36px;top:290px;width:1px;height:34px;background:repeating-linear-gradient(0deg,#8c96a2 0 1px,transparent 1px 2px);"></div>
<div class="r" style="left:37px;top:303px;width:10px;height:1px;background:repeating-linear-gradient(90deg,#8c96a2 0 1px,transparent 1px 2px);"></div>
<div class="r" style="left:37px;top:323px;width:10px;height:1px;background:repeating-linear-gradient(90deg,#8c96a2 0 1px,transparent 1px 2px);"></div>
<div class="r" style="left:23px;top:223px;width:5px;height:1px;background:repeating-linear-gradient(90deg,#8c96a2 0 1px,transparent 1px 2px);"></div>
<div class="r" style="left:23px;top:283px;width:5px;height:1px;background:repeating-linear-gradient(90deg,#8c96a2 0 1px,transparent 1px 2px);"></div>
<div class="r" style="left:11.5px;top:217.5px;width:12px;height:12px;background:#fff;border:1.5px solid #8a8a8a;"></div>
<div class="r" style="left:14px;top:222.5px;width:7px;height:2px;background:#000;"></div>
<div class="r" style="left:11.5px;top:277.5px;width:12px;height:12px;background:#fff;border:1.5px solid #8a8a8a;"></div>
<div class="r" style="left:14px;top:282.5px;width:7px;height:2px;background:#000;"></div>
<svg style="left:259px;top:203px" width="1" height="1"><path d="M-4.5 2.5L0 -2.5L4.5 2.5" stroke="#b8b8b8" stroke-width="2.0" fill="none"/></svg>
<svg style="left:259px;top:581px" width="1" height="1"><path d="M-4.5 -2.5L0 2.5L4.5 -2.5" stroke="#b8b8b8" stroke-width="2.0" fill="none"/></svg>
<svg style="left:20px;top:581px" width="1" height="1"><path d="M2.5 -4.5L-2.5 0L2.5 4.5" stroke="#b8b8b8" stroke-width="2.0" fill="none"/></svg>
<svg style="left:236px;top:581px" width="1" height="1"><path d="M-2.5 -4.5L2.5 0L-2.5 4.5" stroke="#b8b8b8" stroke-width="2.0" fill="none"/></svg>
<svg style="left:285.5px;top:611px" width="1" height="1"><path d="M2.5 -4.5L-2.5 0L2.5 4.5" stroke="#505050" stroke-width="2.0" fill="none"/></svg>
<svg style="left:811px;top:611px" width="1" height="1"><path d="M-2.5 -4.5L2.5 0L-2.5 4.5" stroke="#505050" stroke-width="2.0" fill="none"/></svg>
<svg style="left:922px;top:135px" width="1" height="1"><path d="M-4.5 2.5L0 -2.5L4.5 2.5" stroke="#505050" stroke-width="2.0" fill="none"/></svg>
<svg style="left:922px;top:611px" width="1" height="1"><path d="M-4.5 -2.5L0 2.5L4.5 -2.5" stroke="#505050" stroke-width="2.0" fill="none"/></svg>
<div class="r" style="left:918px;top:363px;width:10px;height:1px;background:#f8f8f8;"></div>
<div class="r" style="left:918px;top:364px;width:10px;height:1px;background:#686868;"></div>
<div class="r" style="left:918px;top:367px;width:10px;height:1px;background:#f8f8f8;"></div>
<div class="r" style="left:918px;top:368px;width:10px;height:1px;background:#686868;"></div>
<div class="r" style="left:822px;top:167px;width:5px;height:14px;background:transparent;border:2px solid #3f7294;border-right:none;"></div>
<div class="r" style="left:906px;top:167px;width:5px;height:14px;background:transparent;border:2px solid #3f7294;border-left:none;"></div>
<div class="r" style="left:1121px;top:132px;width:37px;height:1px;background:#8c929c;"></div>
<div class="r" style="left:1121px;top:135px;width:37px;height:1px;background:#8c929c;"></div>
<div class="r" style="left:1059px;top:144px;width:263px;height:28px;background:linear-gradient(#f8fafd,#dfe5ee);border-bottom:1px solid #b4bac4;"></div>
<div class="r" style="left:1204px;top:145px;width:1px;height:27px;background:#b4bac4;"></div>
<div class="r" style="left:1286px;top:145px;width:1px;height:27px;background:#b4bac4;"></div>
<div class="r" style="left:942px;top:145px;width:117px;height:31px;background:#fff;border:1px solid #b4bac4;border-bottom:none;"></div>
<span class="t" style="left:947.86px;top:150.00px;font-size:16px;line-height:21px;color:#000;letter-spacing:-0.020px;">Project Files</span>
<span class="t" style="left:1063.56px;top:150.00px;font-size:16px;line-height:21px;color:#000;letter-spacing:0.213px;">Project Symbols</span>
<span class="t" style="left:1209.36px;top:150.00px;font-size:16px;line-height:21px;color:#000;letter-spacing:0.321px;">Folders</span>
<span class="t" style="left:950.06px;top:181.00px;font-size:16px;line-height:21px;color:#8a8a8a;letter-spacing:0.012px;">File Name (Ctrl+O)</span>
<div class="r" style="left:1095px;top:210px;width:1px;height:30px;background:#c4cad4;"></div>
<div class="r" style="left:1214px;top:210px;width:1px;height:30px;background:#c4cad4;"></div>
<span class="t" style="left:951.56px;top:215.00px;font-size:16px;line-height:21px;color:#000;letter-spacing:-0.041px;">File Name</span>
<span class="t" style="left:1100.86px;top:215.00px;font-size:16px;line-height:21px;color:#000;letter-spacing:0.596px;">Directory</span>
<span class="t" style="left:1280.36px;top:215.00px;font-size:16px;line-height:21px;color:#000;letter-spacing:-0.448px;">Size</span>
<span class="t" style="left:949.36px;top:240.50px;font-size:16px;line-height:21px;color:#fff;letter-spacing:0.544px;">test1.cpp</span>
<span class="t" style="left:1297.16px;top:240.50px;font-size:16px;line-height:21px;color:#fff;letter-spacing:0.392px;">390</span>
<span class="t" style="left:949.36px;top:260.00px;font-size:16px;line-height:21px;color:#000;letter-spacing:0.544px;">test2.cpp</span>
<span class="t" style="left:1315.00px;top:260.00px;font-size:16px;line-height:21px;color:#000;">0</span>
<svg style="left:1046.5px;top:160px" width="1" height="1"><path d="M-3.2 -3.2L3.2 3.2M3.2 -3.2L-3.2 3.2" stroke="#707070" stroke-width="2.4" stroke-linecap="round" fill="none"/></svg>
<svg style="left:1330.5px;top:151.5px" width="1" height="1"><path d="M-3.6 -3.6L3.6 3.6M3.6 -3.6L-3.6 3.6" stroke="#404040" stroke-width="2.4" stroke-linecap="round" fill="none"/></svg>
<svg style="left:1298px;top:159.5px" width="1" height="1"><path d="M-3.6 -2.0L0 2.0L3.6 -2.0" stroke="#333" stroke-width="2.6" fill="none"/></svg>
<svg style="left:1320px;top:192.5px" width="1" height="1"><path d="M-3.6 -2.0L0 2.0L3.6 -2.0" stroke="#333" stroke-width="2.6" fill="none"/></svg>
<div class="r" style="left:1027px;top:593px;width:1px;height:24px;background:#9aa0aa;"></div>
<span class="t" style="left:35.30px;top:631.50px;font-size:17.5px;line-height:23px;color:#000;letter-spacing:0.520px;font-weight:bold;font-style:italic;text-shadow:1px 2px 2px rgba(0,0,0,.4);-webkit-text-stroke:.6px #000;">Bar::update</span>
<div class="r" style="left:142px;top:634px;width:251px;height:19px;background:linear-gradient(rgba(255,255,255,.7),rgba(255,255,255,.15));border:1px solid #80848c;border-left:none;border-top:none;"></div>
<span class="t" style="left:143.44px;top:635.00px;font-size:14px;line-height:18px;color:#000;letter-spacing:0.053px;">Member Function in test1.cpp at line 11</span>
<svg style="left:1327.5px;top:640.5px" width="1" height="1"><path d="M-3.6 -3.6L3.6 3.6M3.6 -3.6L-3.6 3.6" stroke="#404040" stroke-width="2.4" stroke-linecap="round" fill="none"/></svg>
<svg style="left:87.7px;top:108.3px" width="1" height="1"><path d="M-2.8 -2.8L2.8 2.8M2.8 -2.8L-2.8 2.8" stroke="#8c8c8c" stroke-width="2.4" stroke-linecap="round" fill="none"/></svg>
<svg style="left:1327px;top:667px" width="1" height="1"><path d="M-4.5 2.5L0 -2.5L4.5 2.5" stroke="#505050" stroke-width="2.0" fill="none"/></svg>
<svg style="left:1327px;top:816px" width="1" height="1"><path d="M-4.5 -2.5L0 2.5L4.5 -2.5" stroke="#505050" stroke-width="2.0" fill="none"/></svg>
<svg style="left:17px;top:816px" width="1" height="1"><path d="M2.5 -4.5L-2.5 0L2.5 4.5" stroke="#505050" stroke-width="2.0" fill="none"/></svg>
<svg style="left:1305px;top:816px" width="1" height="1"><path d="M-2.5 -4.5L2.5 0L-2.5 4.5" stroke="#505050" stroke-width="2.0" fill="none"/></svg>
<div class="r" style="left:1316px;top:689px;width:21px;height:27px;background:#f4f4f4;border:1px dashed #d0d0d0;"></div>
<div class="r" style="left:1316px;top:769px;width:21px;height:27px;background:#f4f4f4;border:1px dashed #d0d0d0;"></div>
<div class="r" style="left:1316px;top:716px;width:21px;height:36px;background:#d2d2d2;"></div>
<div class="r" style="left:1316px;top:728px;width:21px;height:12px;background:#8db3d3;"></div>
<svg style="left:1317px;top:728px" width="19" height="12"><path d="M4 4.800h11M4 7.200h11M5.500 2.500L2 6l3.500 3.500M13.500 2.500L17 6l-3.500 3.500" stroke="#fff" stroke-width="1.300" fill="none"/></svg>
<span class="t" style="left:1057px;top:806px;font-size:40px;line-height:56px;color:#fff;font-family:'Liberation Sans','Noto Sans CJK SC',sans-serif;font-weight:500;-webkit-text-stroke:.7px #fff;text-shadow:2px 2px 1px rgba(80,80,80,.85),3px 3px 2px rgba(90,90,90,.5);letter-spacing:0.5px">知乎 @韦易笑</span>
<div class="r" style="left:15px;top:866px;width:592px;height:24px;background:linear-gradient(#f6f7f9,#eceef2);border-left:1px solid #8c8c8c;border-top:1px solid #a8a8a8;border-right:1px solid #fff;"></div>
<div class="r" style="left:621px;top:866px;width:608px;height:24px;background:linear-gradient(#f6f7f9,#eceef2);border-left:1px solid #8c8c8c;border-top:1px solid #a8a8a8;border-right:1px solid #fff;"></div>
<div class="r" style="left:1258px;top:866px;width:72px;height:24px;background:linear-gradient(#f6f7f9,#eceef2);border-left:1px solid #8c8c8c;border-top:1px solid #a8a8a8;border-right:1px solid #fff;"></div>
<div class="r" style="left:1px;top:890px;width:1343px;height:2px;background:#6a6a6a;"></div>
<span class="t" style="left:30.38px;top:869.50px;font-size:15.4px;line-height:20px;color:#000;letter-spacing:0.198px;">Line 21  Col 10   test1 [UTF-8]</span>
<span class="t" style="left:1299.38px;top:869.50px;font-size:15.4px;line-height:20px;color:#000;letter-spacing:-0.220px;">INS</span>
<svg width="0" height="0" style="left:0;top:0"><defs>
<linearGradient id="gA" x1="0" y1="0" x2="0" y2="1"><stop offset="0" stop-color="#9ce4fc"/><stop offset=".3" stop-color="#4cb8ec"/><stop offset=".55" stop-color="#1c8cd4"/><stop offset=".8" stop-color="#0c5c9c"/><stop offset="1" stop-color="#0a4c88"/></linearGradient>
<linearGradient id="gFl" x1="0" y1="0" x2="1" y2="1"><stop offset="0" stop-color="#2e6488"/><stop offset="1" stop-color="#173a58"/></linearGradient>
<linearGradient id="gFo" x1="0" y1="0" x2="0" y2="1"><stop offset="0" stop-color="#f6dc90"/><stop offset="1" stop-color="#d8b060"/></linearGradient>
<linearGradient id="gCy" x1="0" y1="0" x2="1" y2="1"><stop offset="0" stop-color="#8ae8f8"/><stop offset="1" stop-color="#1c9cc0"/></linearGradient>
<linearGradient id="gTe" x1="0" y1="0" x2="1" y2="1"><stop offset="0" stop-color="#8af0e8"/><stop offset="1" stop-color="#189c8c"/></linearGradient>
<linearGradient id="gPu" x1="0" y1="0" x2="0" y2="1"><stop offset="0" stop-color="#c868d8"/><stop offset="1" stop-color="#7c3090"/></linearGradient>
<linearGradient id="gSt" x1="0" y1="0" x2="1" y2="1"><stop offset="0" stop-color="#4a86c0"/><stop offset="1" stop-color="#1e4878"/></linearGradient>
<linearGradient id="gBk" x1="0" y1="0" x2="1" y2="0"><stop offset="0" stop-color="#fbf6d8"/><stop offset="1" stop-color="#e0d098"/></linearGradient>
<linearGradient id="gGe" x1="0" y1="0" x2="0" y2="1"><stop offset="0" stop-color="#5a9ad0"/><stop offset="1" stop-color="#2a68a8"/></linearGradient>
<linearGradient id="gYb" x1="0" y1="0" x2="1" y2="1"><stop offset="0" stop-color="#f4f0b0"/><stop offset="1" stop-color="#8c8430"/></linearGradient>
<radialGradient id="gGl" cx=".35" cy=".3" r=".8"><stop offset="0" stop-color="#7ad0a0"/><stop offset="1" stop-color="#1e7a4c"/></radialGradient>
<radialGradient id="gPc" cx=".4" cy=".3" r=".8"><stop offset="0" stop-color="#4a7aa8"/><stop offset="1" stop-color="#0c2038"/></radialGradient>
<linearGradient id="gPr" x1="0" y1="0" x2="0" y2="1"><stop offset="0" stop-color="#d8dce0"/><stop offset="1" stop-color="#707880"/></linearGradient>
<linearGradient id="gLk" x1="0" y1="0" x2="1" y2="0"><stop offset="0" stop-color="#e8e8e8"/><stop offset="1" stop-color="#8c8c8c"/></linearGradient>
<linearGradient id="gCb" x1="0" y1="0" x2="0" y2="1"><stop offset="0" stop-color="#f8d868"/><stop offset="1" stop-color="#c89418"/></linearGradient>
</defs></svg>
<svg style="left:10px;top:9.5px" width="24" height="24"><circle cx="10" cy="10.500" r="8.800" fill="#e4ecfa" stroke="#6c6cac" stroke-width="1.500"/><ellipse cx="9.500" cy="12.600" rx="6" ry="2.900" fill="none" stroke="#4c6cbc" stroke-width="1.600"/><ellipse cx="9.500" cy="12.800" rx="2.600" ry="1.200" fill="#7c9cd8"/><path d="M9.200 12.400L16.600 1.400" stroke="#28ac3c" stroke-width="2.600" stroke-linecap="round"/><path d="M14 1.200h4v3.600Z" fill="#28ac3c"/></svg>
<svg style="left:9.5px;top:44px" width="24" height="24"><rect x=".5" y=".5" width="17.600" height="13" fill="#d8f4f8" stroke="#94a4ac" stroke-width="1"/><path d="M.5 13.800h17.600" stroke="#7c8c94" stroke-width="1.200"/><path d="M3 2.600h8" stroke="#a8d4dc" stroke-width="1"/><path d="M7 7.500h6" stroke="#9cc4cc" stroke-width="1.400" stroke-dasharray="1.500 1"/></svg>
<div class="r" style="left:5px;top:64px;width:1px;height:23px;background:#a4a8b0;"></div>
<div class="r" style="left:3px;top:86px;width:3px;height:1px;background:#a4a8b0;"></div>
<div class="r" style="left:83px;top:64px;width:1px;height:23px;background:#a4a8b0;"></div>
<div class="r" style="left:81px;top:86px;width:3px;height:1px;background:#a4a8b0;"></div>
<div class="r" style="left:281px;top:64px;width:1px;height:23px;background:#a4a8b0;"></div>
<div class="r" style="left:279px;top:86px;width:3px;height:1px;background:#a4a8b0;"></div>
<div class="r" style="left:451px;top:64px;width:1px;height:23px;background:#a4a8b0;"></div>
<div class="r" style="left:449px;top:86px;width:3px;height:1px;background:#a4a8b0;"></div>
<div class="r" style="left:641px;top:64px;width:1px;height:23px;background:#a4a8b0;"></div>
<div class="r" style="left:639px;top:86px;width:3px;height:1px;background:#a4a8b0;"></div>
<div class="r" style="left:775px;top:64px;width:1px;height:23px;background:#a4a8b0;"></div>
<div class="r" style="left:773px;top:86px;width:3px;height:1px;background:#a4a8b0;"></div>
<div class="r" style="left:937px;top:64px;width:1px;height:23px;background:#a4a8b0;"></div>
<div class="r" style="left:935px;top:86px;width:3px;height:1px;background:#a4a8b0;"></div>
<div class="r" style="left:1071px;top:64px;width:1px;height:23px;background:#a4a8b0;"></div>
<div class="r" style="left:1069px;top:86px;width:3px;height:1px;background:#a4a8b0;"></div>
<div class="r" style="left:1326px;top:64px;width:1px;height:23px;background:#a4a8b0;"></div>
<div class="r" style="left:1324px;top:86px;width:3px;height:1px;background:#a4a8b0;"></div>
<div class="r" style="left:1338px;top:64px;width:1px;height:23px;background:#a4a8b0;"></div>
<div class="r" style="left:1336px;top:86px;width:3px;height:1px;background:#a4a8b0;"></div>
<div class="r" style="left:77px;top:62px;width:1px;height:27px;background:#b4b8c0;"></div>
<div class="r" style="left:78px;top:62px;width:1px;height:27px;background:#fbfcfe;"></div>
<div class="r" style="left:275px;top:62px;width:1px;height:27px;background:#b4b8c0;"></div>
<div class="r" style="left:276px;top:62px;width:1px;height:27px;background:#fbfcfe;"></div>
<div class="r" style="left:445px;top:62px;width:1px;height:27px;background:#b4b8c0;"></div>
<div class="r" style="left:446px;top:62px;width:1px;height:27px;background:#fbfcfe;"></div>
<div class="r" style="left:635px;top:62px;width:1px;height:27px;background:#b4b8c0;"></div>
<div class="r" style="left:636px;top:62px;width:1px;height:27px;background:#fbfcfe;"></div>
<div class="r" style="left:769px;top:62px;width:1px;height:27px;background:#b4b8c0;"></div>
<div class="r" style="left:770px;top:62px;width:1px;height:27px;background:#fbfcfe;"></div>
<div class="r" style="left:931px;top:62px;width:1px;height:27px;background:#b4b8c0;"></div>
<div class="r" style="left:932px;top:62px;width:1px;height:27px;background:#fbfcfe;"></div>
<div class="r" style="left:1065px;top:62px;width:1px;height:27px;background:#b4b8c0;"></div>
<div class="r" style="left:1066px;top:62px;width:1px;height:27px;background:#fbfcfe;"></div>
<div class="r" style="left:1320px;top:62px;width:1px;height:27px;background:#b4b8c0;"></div>
<div class="r" style="left:1321px;top:62px;width:1px;height:27px;background:#fbfcfe;"></div>
<div class="r" style="left:1332px;top:62px;width:1px;height:27px;background:#b4b8c0;"></div>
<div class="r" style="left:1333px;top:62px;width:1px;height:27px;background:#fbfcfe;"></div>
<div class="r" style="left:231px;top:65px;width:1px;height:22px;background:#8c9098;"></div>
<div class="r" style="left:373px;top:65px;width:1px;height:22px;background:#8c9098;"></div>
<svg style="left:15px;top:66px" width="24" height="24"><path d="M0.5 10L9.5 0.8V5.2H19.5V14.8H9.5V19.2Z" fill="url(#gA)" stroke="#0a4c80" stroke-width=".9" stroke-linejoin="round"/></svg>
<svg style="left:43px;top:66px" width="24" height="24"><path d="M19.5 10L10.5 0.8V5.2H0.5V14.8H10.5V19.2Z" fill="url(#gA)" stroke="#0a4c80" stroke-width=".9" stroke-linejoin="round"/></svg>
<svg style="left:96px;top:66.3px" width="24" height="24"><rect x=".7" y="2.2" width="13" height="16" fill="#e6eaf8" stroke="#4a5aa0" stroke-width="1.3"/><path d="M3 8.5h8M3 14h7" stroke="#2a3a8a" stroke-width="1.8"/><path d="M3 11.3h8M3 16.3h4" stroke="#7a8ac0" stroke-width="1"/><rect x="8" y="0" width="9" height="9" rx="1" fill="#3a3a40"/><path d="M12.5 1.3v6.4M9.3 4.5h6.4" stroke="#fff" stroke-width="1.8"/></svg>
<svg style="left:121px;top:66.5px" width="24" height="24"><path d="M.6 5.5h5.5l1.5 1.5h7V16H.6Z" fill="url(#gFo)" stroke="#a88838" stroke-width=".9"/><path d="M.6 16L4.5 9.5H19L14.6 16Z" fill="#c8a460" stroke="#8c6c28" stroke-width=".9"/><path d="M10.5 3.2C12.5 .6 16.5 .8 17.8 4" fill="none" stroke="#111" stroke-width="1.4"/><path d="M19.3 2.2L18.2 6L15 4.3Z" fill="#111"/></svg>
<svg style="left:150px;top:67px" width="24" height="24"><rect x="0.4" y="0.4" width="18" height="18" fill="url(#gFl)" stroke="#12304c" stroke-width=".8"/><rect x="4.0" y="1.0" width="9.36" height="9.0" fill="#e4eaf2"/><rect x="4.36" y="12.280000000000001" width="10.080000000000002" height="5.5200000000000005" fill="#5c8cb4"/><rect x="5.8" y="13.36" width="2.5200000000000005" height="3.6" fill="#1c3c5c"/><rect x="15.16" y="1.8399999999999999" width="1.6199999999999999" height="1.8" fill="#9cc0dc"/></svg>
<svg style="left:178px;top:67px" width="24" height="24"><rect x="0.4" y="0.4" width="18" height="18" fill="url(#gFl)" stroke="#12304c" stroke-width=".8"/><rect x="4.0" y="1.0" width="9.36" height="9.0" fill="#e4eaf2"/><rect x="4.36" y="12.280000000000001" width="10.080000000000002" height="5.5200000000000005" fill="#5c8cb4"/><rect x="5.8" y="13.36" width="2.5200000000000005" height="3.6" fill="#1c3c5c"/><rect x="15.16" y="1.8399999999999999" width="1.6199999999999999" height="1.8" fill="#9cc0dc"/><ellipse cx="8.86" cy="4.720000000000001" rx="2.88" ry="1.98" fill="#e02030"/><rect x="7.6000000000000005" y="5.440000000000001" width="2.5200000000000005" height="2.88" fill="#d83040"/></svg>
<svg style="left:206px;top:67px" width="24" height="24"><rect x="5.5" y="0.4" width="12" height="10.5" fill="url(#gFl)" stroke="#12304c" stroke-width=".8"/><rect x="7.9" y="1.0" width="6.24" height="5.25" fill="#e4eaf2"/><rect x="8.14" y="7.330000000000001" width="6.720000000000001" height="2.97" fill="#5c8cb4"/><rect x="9.1" y="7.96" width="1.6800000000000002" height="2.1" fill="#1c3c5c"/><rect x="15.34" y="1.24" width="1.08" height="1.05" fill="#9cc0dc"/><rect x="3" y="3.6" width="12" height="10.5" fill="url(#gFl)" stroke="#12304c" stroke-width=".8"/><rect x="5.4" y="4.2" width="6.24" height="5.25" fill="#e4eaf2"/><rect x="5.640000000000001" y="10.530000000000001" width="6.720000000000001" height="2.97" fill="#5c8cb4"/><rect x="6.6" y="11.16" width="1.6800000000000002" height="2.1" fill="#1c3c5c"/><rect x="12.84" y="4.44" width="1.08" height="1.05" fill="#9cc0dc"/><rect x="0.4" y="7" width="12" height="11" fill="url(#gFl)" stroke="#12304c" stroke-width=".8"/><rect x="2.8000000000000003" y="7.6" width="6.24" height="5.5" fill="#e4eaf2"/><rect x="3.04" y="14.260000000000002" width="6.720000000000001" height="3.14" fill="#5c8cb4"/><rect x="3.9999999999999996" y="14.92" width="1.6800000000000002" height="2.2" fill="#1c3c5c"/><rect x="10.24" y="7.88" width="1.08" height="1.1" fill="#9cc0dc"/></svg>
<svg style="left:241px;top:67px" width="24" height="24"><path d="M5 .8h11l-2.5 7H2.5Z" fill="#f4f6f8" stroke="#8a9098" stroke-width=".8"/><path d="M6.5 3h7M5.8 5h7" stroke="#b0b8c0" stroke-width=".8"/><path d="M1 8.5L3 7h14l2 1.5v6.5H1Z" fill="url(#gPr)" stroke="#4c545c" stroke-width=".8"/><path d="M2 12.5h16v4.5H3.5Z" fill="#eef0f2" stroke="#6c747c" stroke-width=".7"/><rect x="11" y="12.8" width="5.5" height="3" fill="#28b048"/><path d="M17 4.5c2 1 2.4 6 2.2 10" stroke="#5c646c" stroke-width="1.2" fill="none"/></svg>
<svg style="left:292px;top:66px" width="24" height="24"><rect x=".6" y=".6" width="17.5" height="18.6" fill="#ecece4" stroke="#8a8250" stroke-width="1.2"/><path d="M6 1.5L10.5 12M13 1.5L8.5 12" stroke="#6c7c98" stroke-width="2.2"/><circle cx="6" cy="14.5" r="2.8" fill="none" stroke="#3454c8" stroke-width="2.4"/><circle cx="13" cy="14.5" r="2.8" fill="none" stroke="#3454c8" stroke-width="2.4"/></svg>
<svg style="left:319px;top:67px" width="24" height="24"><path d="M0.8 0.8h7l3.5 3.5v8H0.8Z" fill="#fbfcff" stroke="#1c3890" stroke-width="1.2"/><path d="M7.8 0.8v3.5h3.5" fill="#c8d4f0" stroke="#1c3890" stroke-width=".9"/><path d="M2.8 6.3h6M2.8 8.8h6.5" stroke="#4c74d0" stroke-width="1.3"/><path d="M8.2 4.6h7l3.5 3.5v8H8.2Z" fill="#fbfcff" stroke="#1c3890" stroke-width="1.2"/><path d="M15.2 4.6v3.5h3.5" fill="#c8d4f0" stroke="#1c3890" stroke-width=".9"/><path d="M10.2 10.1h6M10.2 12.6h6.5" stroke="#4c74d0" stroke-width="1.3"/></svg>
<svg style="left:346px;top:67.2px" width="24" height="24"><rect x=".6" y="2.4" width="14" height="15" rx="1" fill="url(#gCb)" stroke="#9c7410" stroke-width=".9"/><rect x="4.3" y=".5" width="6.6" height="4" rx="1" fill="#e8c040" stroke="#7c5c08" stroke-width=".9"/><rect x="6.3" y="1.5" width="2.6" height="1.6" fill="#fff8d0"/><path d="M7.6 9h8l4 4v5.4h-12Z" fill="#f4f6fa" stroke="#1c2430" stroke-width="1.3"/><path d="M9.6 12.2h6M9.6 14.6h8" stroke="#5c7cb0" stroke-width="1.2"/><path d="M7.6 17.8h12" stroke="#10141c" stroke-width="1.8"/></svg>
<svg style="left:385.5px;top:68.2px" width="24" height="24"><path d="M.4 6.2L6.6 .6V3.6C12 3.2 15.4 6.6 14.2 11C13.4 13.6 10.8 15.4 7.4 15.8C10.4 13.8 11.4 9.400 6.600 8.800V11.800Z" fill="#3c6cd0" stroke="#2a54b0" stroke-width=".6"/></svg>
<svg style="left:413.5px;top:68.2px" width="24" height="24"><path d="M15.600 6.200L9.400 .6V3.600C4 3.200 .6 6.600 1.800 11C2.600 13.600 5.200 15.400 8.600 15.800C5.600 13.800 4.600 9.400 9.400 8.800V11.800Z" fill="#3c6cd0" stroke="#2a54b0" stroke-width=".6"/></svg>
<svg style="left:460px;top:66px" width="24" height="24"><rect x=".8" y=".8" width="18" height="18.6" fill="#f2ecd8" stroke="#5c4a18" stroke-width="1.5"/><rect x="2" y="14.5" width="9" height="3.6" fill="#e0d4b0"/><path d="M11.239999999999998 10.84L16.439999999999998 16.04" stroke="#c87c20" stroke-width="2.6" stroke-linecap="round"/><circle cx="7.6" cy="7.2" r="5.2" fill="#a4d0f4" stroke="#7cacd8" stroke-width="1.2"/><circle cx="6.6" cy="6.0" r="2.3400000000000003" fill="#d0e8fc"/></svg>
<svg style="left:488px;top:66px" width="24" height="24"><rect x=".7" y="2.8" width="14" height="16" fill="#f4eee0" stroke="#c8a472" stroke-width="1.3"/><path d="M9.74 11.94L9.74 11.94" stroke="#c87c20" stroke-width="2.6" stroke-linecap="round"/><circle cx="6.8" cy="9" r="4.2" fill="#a4d0f4" stroke="#7cacd8" stroke-width="1.2"/><circle cx="5.8" cy="7.8" r="1.8900000000000001" fill="#d0e8fc"/><path d="M1.5 17L5 13.2" stroke="#b88c40" stroke-width="2.2"/><path d="M16 .3L21.6 7H18.2V17H13.8V7H10.4Z" fill="#c41018" stroke="#7c0408" stroke-width=".7"/></svg>
<svg style="left:516px;top:66px" width="24" height="24"><rect x=".7" y=".8" width="14" height="16" fill="#f4eee0" stroke="#c8a472" stroke-width="1.3"/><path d="M9.74 10.44L9.74 10.44" stroke="#c87c20" stroke-width="2.6" stroke-linecap="round"/><circle cx="6.8" cy="7.5" r="4.2" fill="#a4d0f4" stroke="#7cacd8" stroke-width="1.2"/><circle cx="5.8" cy="6.3" r="1.8900000000000001" fill="#d0e8fc"/><path d="M1.5 15.6L5 11.8" stroke="#b88c40" stroke-width="2.2"/><path d="M16 20.4L21.6 13.6H18.2V4H13.8V13.6H10.4Z" fill="#c41018" stroke="#7c0408" stroke-width=".7"/></svg>
<svg style="left:544px;top:66px" width="24" height="24"><rect x=".8" y=".8" width="18" height="18.6" fill="#f2ecd8" stroke="#5c4a18" stroke-width="1.5"/><path d="M12 2.2h5.4v3" stroke="#5c4a18" stroke-width="1.6" fill="none"/><rect x="2" y="14.5" width="9" height="3.6" fill="#e0d4b0"/><path d="M11.239999999999998 11.64L16.24 16.64" stroke="#c87c20" stroke-width="2.6" stroke-linecap="round"/><circle cx="7.6" cy="8" r="5.2" fill="#a4d0f4" stroke="#7cacd8" stroke-width="1.2"/><circle cx="6.6" cy="6.8" r="2.3400000000000003" fill="#d0e8fc"/></svg>
<svg style="left:571.5px;top:71px" width="24" height="24"><text x="-.5" y="9.6" style="font-family:'Liberation Sans',sans-serif;font-size:12.5px;font-weight:bold" fill="#14146c">X</text><text x="13.8" y="9.6" style="font-family:'Liberation Sans',sans-serif;font-size:12.5px;font-weight:bold" fill="#14146c">Y</text><path d="M7.6 5h5" stroke="#e01828" stroke-width="1.7"/><path d="M14 5L10.6 2.2V7.8Z" fill="#e01828"/></svg>
<div class="r" style="left:597px;top:63px;width:28px;height:25px;background:#d2e6fa;border:1px solid #a8c8ec;"></div>
<svg style="left:600px;top:67px" width="24" height="24"><ellipse cx="10.5" cy="8" rx="9" ry="7.6" fill="#d0d8e4" stroke="#a8b4c8" stroke-width=".8"/><path d="M10.5 .5v15M1.5 8h18" stroke="#b4c0d0" stroke-width=".7"/><text x=".2" y="10.6" style="font-family:'Liberation Sans',sans-serif;font-size:9.2px;font-weight:bold;letter-spacing:-.4px" fill="#2c3c98">www</text><path d="M13.5 12L18.5 16.8" stroke="#c87c20" stroke-width="2.8" stroke-linecap="round"/></svg>
<svg style="left:652px;top:66px" width="24" height="24"><rect x=".4" y=".4" width="17.6" height="12.6" fill="#a4a8a8" stroke="#8c9090" stroke-width=".8"/><path d="M8 2.8v7.6L3.6 6.6Z M10.6 2.8v7.6c2.6 0 4-1.6 4-3.8s-1.4-3.8-4-3.8Z" fill="#e81420"/><path d="M.4 16.6L4.2 13.4v2.2h2.4v2H4.2v2.2Z" fill="#e01420"/><path d="M8.4 16.6h9.6" stroke="#c01420" stroke-width="1.3" stroke-dasharray="1.4 1.4"/></svg>
<svg style="left:680px;top:66px" width="24" height="24"><rect x=".4" y=".4" width="17.6" height="12.6" fill="#a4a8a8" stroke="#8c9090" stroke-width=".8"/><path d="M8 2.8v7.6L3.6 6.6Z M10.6 2.8v7.6c2.6 0 4-1.6 4-3.8s-1.4-3.8-4-3.8Z" fill="#e81420"/><path d="M19.6 16.6L15.8 13.4v2.2h-2.4v2h2.4v2.2Z" fill="#e01420"/><path d="M2 16.6h9.6" stroke="#c01420" stroke-width="1.3" stroke-dasharray="1.4 1.4"/></svg>
<svg style="left:706px;top:67.5px" width="24" height="24"><path d="M0 4.6L4.8 8.2L0 11.8Z" fill="#14146c"/><rect x="5.6" y=".8" width="13.8" height="13.8" fill="#fff" stroke="#14146c" stroke-width="1.3"/><rect x="5.6" y=".8" width="13.8" height="2.6" fill="#14146c"/><path d="M9.6 6.4h7M9.6 9h7M9.6 11.6h7" stroke="#8c8c94" stroke-width="1.2"/></svg>
<svg style="left:735px;top:66px" width="24" height="24"><path d="M1.4 .5H18.6V17.6L16.6 19.6H.4V1.5Z" fill="url(#gSt)" stroke="#1c406c" stroke-width=".7"/><path d="M9.6 3.2l1.9 4.3 4.7.5-3.5 3.1 1 4.6-4.1-2.4-4.1 2.4 1-4.6L3 8l4.7-.5Z" fill="#fff"/></svg>
<svg style="left:784.5px;top:66.5px" width="24" height="24"><rect x="5" y=".6" width="14.600" height="15.400" fill="#fbfbff" stroke="#1c2470" stroke-width="1.300"/><rect x="11.500" y="4" width="3" height="10" fill="#b4b4c0"/><rect x="15.600" y="6.600" width="2.400" height="7.400" fill="#c8c8d4"/><path d="M7 16.600h13.200V3" stroke="#70748c" stroke-width="1.300" fill="none"/><g transform="translate(-.6 -2.800) scale(1.160)"><path d="M6.400 19.400c-2.400-.3-4-2-5.400-5.600-.6-1.500.8-2.200 1.800-1L4 14.400V9.600c0-1.400 1.900-1.400 1.900 0V5.200c0-1.500 2.100-1.500 2.100 0v4c0-1.300 1.900-1.300 1.900 0v1c0-1.200 1.900-1.200 1.900 0V15c0 2.600-1.200 4.400-3 4.400Z" fill="#d89838" stroke="#5c3808" stroke-width=".85"/><path d="M5.900 10v4M8 10v4M9.900 11v3" stroke="#7c4c0c" stroke-width=".7"/></g></svg>
<svg style="left:812.5px;top:67px" width="24" height="24"><text x="-.4" y="12.4" style="font-family:'Liberation Sans',sans-serif;font-size:13.5px;font-weight:bold" fill="#e4d418" stroke="#b0a008" stroke-width=".4">?</text><rect x="8.6" y="3" width="11" height="13" fill="#fdfdff" stroke="#14186c" stroke-width="1.4"/><path d="M10 17.2h10.6V5" stroke="#8c90a8" stroke-width="1.2" fill="none"/><path d="M11 6.4h6.4M11 9h6.4M11 11.6h6.4M11 13.8h4" stroke="#a8a8b4" stroke-width="1"/></svg>
<svg style="left:840.5px;top:67.2px" width="24" height="24"><path d="M.9 2.200C3.600 .8 7 .8 9.600 2.400 12.200 .8 15.600 .8 18.300 2.200V16.400C15.600 15.400 12.200 15.400 9.600 16.800 7 15.400 3.600 15.400 .9 16.400Z" fill="url(#gBk)" stroke="#241c0c" stroke-width="1.300"/><path d="M9.600 2.400V16.800" stroke="#241c0c" stroke-width="1.300"/><path d="M2.800 4.600h4.800M2.800 6.800h4.800M2.800 9h4.800M2.800 11.200h4.800M2.800 13.400h4.800M11.600 4.600h4.800M11.600 6.800h4.800M11.600 9h4.800M11.600 11.200h4.800M11.600 13.400h4.800" stroke="#c4a868" stroke-width="1"/><path d="M.9 16.400v1.600M18.300 16.400v1.600M7.800 17.600h3.600" stroke="#241c0c" stroke-width="1.300"/></svg>
<svg style="left:868px;top:67px" width="24" height="24"><rect x=".6" y="2" width="12" height="15.4" fill="#f2ecd8" stroke="#b89c68" stroke-width="1.200"/><text x="1.2" y="14" style="font-family:'Liberation Serif',serif;font-size:13px;font-weight:bold;font-style:italic;letter-spacing:-.8px" fill="#0c0c0c">fx</text><path d="M16 .200L21.600 7H18.200V17H13.800V7H10.400Z" fill="#d01018" stroke="#800408" stroke-width=".7"/></svg>
<svg style="left:896px;top:67.5px" width="24" height="24"><text x="1" y="16.400" style="font-family:'Liberation Serif',serif;font-size:22px;font-style:italic" fill="#22229c" stroke="#22229c" stroke-width=".5" transform="scale(1.150 1)">R</text><path d="M1.200 6.400C5 1.600 13 .600 20 1.600" stroke="#2a2aa4" stroke-width="2.200" fill="none" stroke-linecap="round"/></svg>
<svg style="left:947px;top:68px" width="24" height="24"><rect x="0.8" y="0.8" width="18" height="13.6" fill="#fff" stroke="#16166c" stroke-width="1.400"/><rect x="0.8" y="0.8" width="18" height="2.600" fill="#16166c"/><path d="M9.800 3v11.400M.800 8.600h18" stroke="#16166c" stroke-width="1.400"/><path d="M3.400 5.800h4M12.200 5.800h4M3.400 11.400h4M12.200 11.400h4" stroke="#a8a8c0" stroke-width="1.400"/></svg>
<svg style="left:975px;top:68px" width="24" height="24"><rect x="0.8" y="0.8" width="18" height="13.6" fill="#fff" stroke="#16166c" stroke-width="1.400"/><rect x="0.8" y="0.8" width="18" height="2.600" fill="#16166c"/><path d="M3.400 5.800h12M4.600 8.600h11M5.600 11.400h10" stroke="#d0c4a8" stroke-width="1.100"/></svg>
<svg style="left:1003px;top:68px" width="24" height="24"><rect x="0.8" y="0.8" width="18" height="13.6" fill="#fff" stroke="#16166c" stroke-width="1.400"/><rect x="0.8" y="0.8" width="18" height="2.600" fill="#16166c"/><path d="M.800 8.800h18" stroke="#16166c" stroke-width="1.500"/><path d="M3.400 5.400h6M8.400 6.600h6M3.400 11.200h6M7.400 12.600h6" stroke="#a8a8c0" stroke-width="1.100"/></svg>
<svg style="left:1030px;top:67px" width="24" height="24"><rect x=".6" y=".6" width="14" height="10" fill="#fbfbfb" stroke="#8c8c8c" stroke-width="1.100"/><rect x="3" y="3" width="14" height="10" fill="#fbfbfb" stroke="#8c8c8c" stroke-width="1.100"/><rect x="5.6" y="5.8" width="14" height="10.8" fill="#fff" stroke="#16166c" stroke-width="1.400"/><rect x="5.6" y="5.8" width="14" height="2.600" fill="#16166c"/><path d="M7.800 11h8M7.800 13.400h9.600" stroke="#a8a8c0" stroke-width="1.300"/><path d="M7 17.600h13.600V8" stroke="#50507c" stroke-width="1.200" fill="none"/></svg>
<div class="r" style="left:1077px;top:63px;width:28px;height:25px;background:#c2dcf8;border:1px solid #9cc4ec;"></div>
<div class="r" style="left:1105px;top:63px;width:28px;height:25px;background:#c2dcf8;border:1px solid #9cc4ec;border-left:none;"></div>
<svg style="left:1081px;top:66px" width="24" height="24"><circle cx="10" cy="10" r="9.600" fill="url(#gPc)"/><circle cx="10" cy="10" r="6.300" fill="#fff"/><text x="6" y="14.600" style="font-family:'Liberation Sans',sans-serif;font-size:12.500px;font-weight:bold" fill="#0c1c30">P</text></svg>
<svg style="left:1109px;top:67px" width="24" height="24"><path d="M3 3h15v14H3Z" fill="none" stroke="#1c2430" stroke-width="1.500"/><path d="M3 3L7 6M18 3l-4 3M3 17l4-3M18 17l-4-3" stroke="#54606c" stroke-width="1.200"/><path d="M8 11.500h6V7.500h-2.500v2H8Z" fill="#28303c"/><circle cx="3" cy="3" r="2.200" fill="#34485c" stroke="#1c2834" stroke-width=".5"/><circle cx="18" cy="3" r="2.200" fill="#34485c" stroke="#1c2834" stroke-width=".5"/><circle cx="3" cy="17" r="2.200" fill="#34485c" stroke="#1c2834" stroke-width=".5"/><circle cx="18" cy="17" r="2.200" fill="#34485c" stroke="#1c2834" stroke-width=".5"/></svg>
<svg style="left:1137px;top:67px" width="24" height="24"><path d="M0 8.200h7.600M7.600 2.400V14.400M7.600 2.400H11M7.600 8.200H11M7.600 14.400H11" stroke="#3c3c14" stroke-width="1.200" fill="none"/><rect x="2.400" y="6.400" width="3.600" height="2.400" fill="#b8b878"/><rect x="10.800" y="0.4" width="7" height="3.800" fill="#e4e4b4" stroke="#a4a468" stroke-width=".5"/><path d="M10.800 4.2h7" stroke="#3c3c14" stroke-width="1.100"/><rect x="10.800" y="6.2" width="7" height="3.800" fill="#e4e4b4" stroke="#a4a468" stroke-width=".5"/><path d="M10.800 10.0h7" stroke="#3c3c14" stroke-width="1.100"/><rect x="10.800" y="12.2" width="7" height="3.800" fill="#e4e4b4" stroke="#a4a468" stroke-width=".5"/><path d="M10.800 16.0h7" stroke="#3c3c14" stroke-width="1.100"/></svg>
<svg style="left:1167.5px;top:67px" width="24" height="24"><rect x=".7" y=".7" width="14.600" height="16.600" fill="#eef0fa" stroke="#4858a4" stroke-width="1.400"/><text x="2.600" y="11" style="font-family:'Liberation Sans',sans-serif;font-size:12px;font-weight:bold" fill="#14207c">S</text><rect x="10.200" y="9.600" width="3.400" height="1.800" fill="#5c6cb0"/><path d="M2.600 14h10.800" stroke="#4858a4" stroke-width="1.300"/></svg>
<svg style="left:1192px;top:67px" width="24" height="24"><rect x="0" y="5" width="4.4" height="12.4" fill="url(#gYb)"/><rect x="4.4" y="0.6" width="6.4" height="4.4" fill="url(#gYb)"/><rect x="6.4" y="9" width="8.6" height="6.6" fill="url(#gYb)"/><rect x="16" y="2.4" width="5.4" height="6.4" fill="url(#gYb)"/></svg>
<svg style="left:1221px;top:67.5px" width="24" height="24"><rect x="2.400" y="2.600" width="18" height="14.400" fill="#8c90a8"/><rect x=".9" y=".9" width="18" height="14" fill="#fff" stroke="#12126c" stroke-width="1.800"/><rect x=".9" y=".9" width="18" height="2.400" fill="#12126c"/><rect x="1.800" y="3.400" width="3.600" height="10.600" fill="#f0e470"/><path d="M6.600 5.400h2M6.600 8h2M6.600 10.600h2M6.600 12.800h2" stroke="#14146c" stroke-width="1.200"/><text x="10" y="13.400" style="font-family:'Liberation Sans',sans-serif;font-size:12.500px;font-weight:bold" fill="#12126c">?</text></svg>
<svg style="left:1250px;top:66px" width="24" height="24"><rect x="9.400" y=".5" width="9.400" height="19" fill="url(#gLk)" stroke="#54585c" stroke-width="1"/><path d="M11.800 3.200h4.400M11.800 6h4.400M11.800 8.800h4.400" stroke="#54585c" stroke-width="1.300"/><rect x="0.6" y="5" width="7.600" height="5.800" fill="#f4f4fc" stroke="#1c2c6c" stroke-width="1.200"/><rect x="3.4" y="8" width="7.600" height="5.800" fill="#f4f4fc" stroke="#1c2c6c" stroke-width="1.200"/><rect x="6.4" y="11" width="7.600" height="5.800" fill="#f4f4fc" stroke="#1c2c6c" stroke-width="1.200"/></svg>
<svg style="left:1277px;top:66.5px" width="24" height="24"><circle cx="7.800" cy="7.600" r="7.400" fill="url(#gGl)"/><path d="M3 4c3 1 4 4 2 7M9 1c2 3 1 6-1 8" stroke="#a8e4c0" stroke-width=".8" fill="none"/><rect x="5.600" y="6.400" width="14.600" height="12.200" fill="#fdfdff" stroke="#14186c" stroke-width="1.300"/><rect x="5.600" y="6.400" width="14.600" height="2.400" fill="#14186c"/><path d="M8.400 11.600h9M8.400 14h7M8.400 16.200h9" stroke="#7c84a8" stroke-width="1.100"/></svg>
<svg style="left:1304px;top:66px" width="24" height="24"><path d="M2.600 1.200C4 -.4 6.200 .4 6.400 2.600L8 6.500c2.200 1.800 4.400 4.200 4.400 7.500v2.500H8.500c-1-1.600-3.600-1.500-5.500-.8L.6 16.600c.4-1.600 2-2.600 3.600-2.800C3.400 11 3 8 3.400 5.400 2.200 4.400 1.800 2.400 2.600 1.200Z" fill="#7c3c1c" stroke="#5c2810" stroke-width=".5"/></svg>
<div class="r" style="left:1280px;top:54px;width:7px;height:2px;background:#7c8088;"></div>
<svg style="left:1303px;top:46px" width="12" height="12"><path d="M3.500 3V1h6.500v5.500H8" stroke="#70747c" stroke-width="1.300" fill="none"/><rect x="1" y="3.800" width="6.600" height="5" fill="none" stroke="#70747c" stroke-width="1.400"/></svg>
<svg style="left:1330.5px;top:51px" width="1" height="1"><path d="M-3 -3L3 3M3 -3L-3 3" stroke="#70747c" stroke-width="2.2" stroke-linecap="round" fill="none"/></svg>
<svg style="left:29px;top:196.5px" width="24" height="24"><path d="M4.500 1.500V12.500M9.500 1.500V12.500M1.500 4.500H12.500M1.500 9.500H12.500" stroke="#0c0c0c" stroke-width="3.200" stroke-linecap="square"/><path d="M4.500 1.500V12.500M9.500 1.500V12.500M1.500 4.500H12.500M1.500 9.500H12.500" stroke="#d4f05c" stroke-width="1.500" stroke-linecap="square"/></svg>
<svg style="left:30px;top:217px" width="24" height="24"><path d="M11.400 3.200A5 4.500 0 1 0 11.400 9" stroke="url(#gPu)" stroke-width="3.800" fill="none"/><path d="M11.400 3.200A5 4.500 0 1 0 11.400 9" stroke="#6c2480" stroke-width="4.600" fill="none" opacity=".25"/></svg>
<svg style="left:30px;top:277px" width="24" height="24"><path d="M11.400 3.200A5 4.500 0 1 0 11.400 9" stroke="url(#gPu)" stroke-width="3.800" fill="none"/><path d="M11.400 3.200A5 4.500 0 1 0 11.400 9" stroke="#6c2480" stroke-width="4.600" fill="none" opacity=".25"/></svg>
<svg style="left:48.5px;top:236.5px" width="24" height="24"><rect x=".5" y=".5" width="13.800" height="12.800" fill="url(#gCy)" stroke="#0c6c84" stroke-width="1"/><rect x="4" y="3" width="7" height="6.600" fill="#fff"/><rect x="5.400" y="4.400" width="5.600" height="3.800" fill="#0808a0"/><path d="M4 3v6.600h7" stroke="#2838b8" stroke-width=".9" fill="none"/></svg>
<svg style="left:48.5px;top:256.5px" width="24" height="24"><rect x=".5" y=".5" width="13.800" height="12.800" fill="url(#gCy)" stroke="#0c6c84" stroke-width="1"/><rect x="4" y="3" width="7" height="6.600" fill="#fff"/><rect x="5.400" y="4.400" width="5.600" height="3.800" fill="#0808a0"/><path d="M4 3v6.600h7" stroke="#2838b8" stroke-width=".9" fill="none"/></svg>
<svg style="left:48.5px;top:296.5px" width="24" height="24"><rect x=".5" y=".5" width="13.800" height="12.800" fill="url(#gCy)" stroke="#0c6c84" stroke-width="1"/><rect x="4" y="3" width="7" height="6.600" fill="#fff"/><rect x="5.400" y="4.400" width="5.600" height="3.800" fill="#0808a0"/><path d="M4 3v6.600h7" stroke="#2838b8" stroke-width=".9" fill="none"/></svg>
<svg style="left:48.5px;top:316.5px" width="24" height="24"><rect x=".5" y=".5" width="13.800" height="12.800" fill="url(#gCy)" stroke="#0c6c84" stroke-width="1"/><rect x="4" y="3" width="7" height="6.600" fill="#fff"/><rect x="5.400" y="4.400" width="5.600" height="3.800" fill="#0808a0"/><path d="M4 3v6.600h7" stroke="#2838b8" stroke-width=".9" fill="none"/></svg>
<svg style="left:29.5px;top:336.5px" width="24" height="24"><rect x=".5" y=".5" width="14" height="12.800" fill="url(#gTe)" stroke="#148c7c" stroke-width=".9"/><path d="M4.400 3.600h6.400M4.400 3.600v6.400h6.400M7 6.800h3.800" stroke="#f4fffc" stroke-width="1.500" fill="none"/><rect x="6" y="5" width="3.600" height="3.600" fill="#8c8c98"/></svg>
<svg style="left:29.5px;top:356.5px" width="24" height="24"><rect x=".5" y=".5" width="14" height="12.800" fill="url(#gTe)" stroke="#148c7c" stroke-width=".9"/><path d="M4.400 3.600h6.400M4.400 3.600v6.400h6.400M7 6.800h3.800" stroke="#f4fffc" stroke-width="1.500" fill="none"/><rect x="6" y="5" width="3.600" height="3.600" fill="#8c8c98"/></svg>
<div class="r" style="left:41px;top:596px;width:28px;height:25px;background:#aad0f2;border:1px solid #98c0e8;"></div>
<svg style="left:16.5px;top:604px" width="28" height="16"><text x="0" y="10.400" style="font-family:'Liberation Sans',sans-serif;font-size:13.500px;letter-spacing:-.2px" fill="#14146c" stroke="#14146c" stroke-width=".35">A-Z</text></svg>
<svg style="left:46.5px;top:599.5px" width="24" height="24"><rect x="1" y="1" width="16.400" height="16.800" fill="#e4ccc4"/><path d="M1 18V1H17.400" stroke="#0c0c0c" stroke-width="2" fill="none"/><path d="M4.400 5.200h2.600M4.400 9.400h2.600M4.400 13.600h2.600" stroke="#c01828" stroke-width="1.800"/><path d="M8.800 5.200h6.600M8.800 9.400h6.600M8.800 13.600h6.600" stroke="#7c7c84" stroke-width="1.500"/></svg>
<svg style="left:73px;top:600px" width="24" height="24"><circle cx="4.400" cy="4.200" r="4" fill="#1010d0"/><path d="M.5 4.200h7.800M4.400 .3v7.800" stroke="#3838f0" stroke-width="1"/><rect x="11.200" y=".4" width="9" height="7" fill="#38d0c0" stroke="#189484" stroke-width=".8"/><path d="M13.400 3.800h1.600M16.400 3.800h1.600" stroke="#0c6c60" stroke-width="1.200"/><path d="M4.400 9.400v7.200M1 11.200l6.800 3.600M7.800 11.200L1 14.800" stroke="#e01020" stroke-width="2"/><path d="M12 10.600h8M16.400 10.600v6.600h-2.600" stroke="#c0b828" stroke-width="2.300" fill="none"/></svg>
<div class="r" style="left:99px;top:598px;width:1px;height:22px;background:#8c9098;"></div>
<svg style="left:109px;top:600px" width="24" height="24"><path d="M.9 2.200C3.600 .8 7 .8 9.600 2.400 12.200 .8 15.600 .8 18.300 2.200V16.400C15.600 15.400 12.200 15.400 9.600 16.800 7 15.400 3.600 15.400 .9 16.400Z" fill="url(#gBk)" stroke="#241c0c" stroke-width="1.300"/><path d="M9.600 2.400V16.800" stroke="#241c0c" stroke-width="1.300"/><path d="M2.800 4.600h4.800M2.800 6.800h4.800M2.800 9h4.800M2.800 11.200h4.800M2.800 13.400h4.800M11.600 4.600h4.800M11.600 6.800h4.800M11.600 9h4.800M11.600 11.200h4.800M11.600 13.400h4.800" stroke="#c4a868" stroke-width="1"/><path d="M.9 16.400v1.600M18.300 16.400v1.600M7.800 17.600h3.600" stroke="#241c0c" stroke-width="1.300"/></svg>
<svg style="left:136px;top:598.5px" width="24" height="24"><path d="M8.19 2.72L8.37 0.23L11.63 0.23L11.81 2.72L13.87 3.57L15.76 1.95L18.05 4.24L16.43 6.13L17.28 8.19L19.77 8.37L19.77 11.63L17.28 11.81L16.43 13.87L18.05 15.76L15.76 18.05L13.87 16.43L11.81 17.28L11.63 19.77L8.37 19.77L8.19 17.28L6.13 16.43L4.24 18.05L1.95 15.76L3.57 13.87L2.72 11.81L0.23 11.63L0.23 8.37L2.72 8.19L3.57 6.13L1.95 4.24L4.24 1.95L6.13 3.57Z" fill="url(#gGe)" stroke="#245c98" stroke-width=".5" stroke-linejoin="round"/><circle cx="10" cy="10" r="2.10" fill="#e8eef6"/></svg>
<svg style="left:945px;top:596.5px" width="24" height="24"><path d="M.6 5.500h5.500l1.500 1.500h7V17H.6Z" fill="#88a8c4" stroke="#3c6484" stroke-width=".9"/><path d="M.6 17L4.500 10H19L14.600 17Z" fill="#4c7c9c" stroke="#2c5474" stroke-width=".9"/><path d="M10.500 3.200C12.500 .6 16.500 .8 17.800 4" fill="none" stroke="#2c4c64" stroke-width="1.400"/><path d="M19.300 2.200L18.200 6L15 4.300Z" fill="#2c4c64"/><text x="8.200" y="17.400" style="font-family:'Liberation Sans',sans-serif;font-size:12px;font-weight:bold" fill="#fff" stroke="#fff" stroke-width=".5">p</text></svg>
<svg style="left:972px;top:595px" width="26" height="24"><circle cx="10" cy="10" r="9.600" fill="url(#gPc)"/><circle cx="10" cy="10" r="6.300" fill="#fff"/><text x="6" y="14.600" style="font-family:'Liberation Sans',sans-serif;font-size:12.500px;font-weight:bold" fill="#0c1c30">P</text><path d="M17 -.5v7M13.500 3h7" stroke="#fff" stroke-width="2.600"/><path d="M17 .3v5.400M14.300 3h5.400" stroke="#fff" stroke-width="1.400"/></svg>
<svg style="left:1000.5px;top:597.5px" width="24" height="24"><path d="M.8 .8H15l4.400 4.400V15.800H.8Z" fill="#fff" stroke="#0c0c0c" stroke-width="1.200"/><path d="M15 .8V5.200h4.400" fill="#d8d8d8" stroke="#0c0c0c" stroke-width="1"/><path d="M.4 15.600h19.400" stroke="#0c0c0c" stroke-width="2.200"/><path d="M2.800 6.2h3.600M7.800 6.2h4.400M13.600 6.2h3.800" stroke="#8c8c8c" stroke-width="1.100"/><path d="M2.800 9.2h3.600M7.800 9.2h4.400M13.600 9.2h3.800" stroke="#8c8c8c" stroke-width="1.100"/><path d="M2.800 12.2h3.600M7.800 12.2h4.400M13.600 12.2h3.800" stroke="#8c8c8c" stroke-width="1.100"/></svg>
<svg style="left:1036px;top:594.5px" width="24" height="24"><path d="M8.19 2.72L8.37 0.23L11.63 0.23L11.81 2.72L13.87 3.57L15.76 1.95L18.05 4.24L16.43 6.13L17.28 8.19L19.77 8.37L19.77 11.63L17.28 11.81L16.43 13.87L18.05 15.76L15.76 18.05L13.87 16.43L11.81 17.28L11.63 19.77L8.37 19.77L8.19 17.28L6.13 16.43L4.24 18.05L1.95 15.76L3.57 13.87L2.72 11.81L0.23 11.63L0.23 8.37L2.72 8.19L3.57 6.13L1.95 4.24L4.24 1.95L6.13 3.57Z" fill="url(#gGe)" stroke="#245c98" stroke-width=".5" stroke-linejoin="round"/><circle cx="10" cy="10" r="2.10" fill="#e8eef6"/></svg>
<svg style="left:8px;top:634px" width="24" height="24"><g transform="scale(.92 .96)"><path d="M3 3h15v14H3Z" fill="none" stroke="#1c2430" stroke-width="1.500"/><path d="M3 3L7 6M18 3l-4 3M3 17l4-3M18 17l-4-3" stroke="#54606c" stroke-width="1.200"/><path d="M8 11.500h6V7.500h-2.500v2H8Z" fill="#28303c"/><circle cx="3" cy="3" r="2.200" fill="#34485c" stroke="#1c2834" stroke-width=".5"/><circle cx="18" cy="3" r="2.200" fill="#34485c" stroke="#1c2834" stroke-width=".5"/><circle cx="3" cy="17" r="2.200" fill="#34485c" stroke="#1c2834" stroke-width=".5"/><circle cx="18" cy="17" r="2.200" fill="#34485c" stroke="#1c2834" stroke-width=".5"/></g></svg>
<svg style="left:9px;top:834.5px" width="24" height="24"><path d="M0.5 10L9.5 0.8V5.2H19.5V14.8H9.5V19.2Z" fill="url(#gA)" stroke="#0a4c80" stroke-width=".9" stroke-linejoin="round"/></svg>
<svg style="left:37px;top:834.5px" width="24" height="24"><path d="M19.5 10L10.5 0.8V5.2H0.5V14.8H10.5V19.2Z" fill="url(#gA)" stroke="#0a4c80" stroke-width=".9" stroke-linejoin="round"/></svg>
<svg style="left:64.5px;top:834.5px" width="24" height="24"><rect x="5" y=".6" width="14.600" height="15.400" fill="#fbfbff" stroke="#1c2470" stroke-width="1.300"/><rect x="11.500" y="4" width="3" height="10" fill="#b4b4c0"/><rect x="15.600" y="6.600" width="2.400" height="7.400" fill="#c8c8d4"/><path d="M7 16.600h13.200V3" stroke="#70748c" stroke-width="1.300" fill="none"/><g transform="translate(-.6 -2.800) scale(1.160)"><path d="M6.400 19.400c-2.400-.3-4-2-5.400-5.600-.6-1.500.8-2.200 1.800-1L4 14.400V9.600c0-1.400 1.900-1.400 1.900 0V5.200c0-1.500 2.100-1.500 2.100 0v4c0-1.300 1.900-1.300 1.900 0v1c0-1.200 1.900-1.200 1.900 0V15c0 2.600-1.200 4.400-3 4.400Z" fill="#d89838" stroke="#5c3808" stroke-width=".85"/><path d="M5.900 10v4M8 10v4M9.900 11v3" stroke="#7c4c0c" stroke-width=".7"/></g></svg>
<svg style="left:92.5px;top:836px" width="24" height="24"><text x="-.4" y="12.4" style="font-family:'Liberation Sans',sans-serif;font-size:13.5px;font-weight:bold" fill="#e4d418" stroke="#b0a008" stroke-width=".4">?</text><rect x="8.6" y="3" width="11" height="13" fill="#fdfdff" stroke="#14186c" stroke-width="1.4"/><path d="M10 17.2h10.6V5" stroke="#8c90a8" stroke-width="1.2" fill="none"/><path d="M11 6.4h6.4M11 9h6.4M11 11.6h6.4M11 13.8h4" stroke="#a8a8b4" stroke-width="1"/></svg>
<svg style="left:121px;top:836px" width="24" height="24"><path d="M.9 2.200C3.600 .8 7 .8 9.600 2.400 12.200 .8 15.600 .8 18.300 2.200V16.400C15.600 15.400 12.200 15.400 9.600 16.800 7 15.400 3.600 15.400 .9 16.400Z" fill="url(#gBk)" stroke="#241c0c" stroke-width="1.300"/><path d="M9.600 2.400V16.800" stroke="#241c0c" stroke-width="1.300"/><path d="M2.800 4.600h4.800M2.800 6.800h4.800M2.800 9h4.800M2.800 11.200h4.800M2.800 13.400h4.800M11.600 4.600h4.800M11.600 6.800h4.800M11.600 9h4.800M11.600 11.200h4.800M11.600 13.400h4.800" stroke="#c4a868" stroke-width="1"/><path d="M.9 16.400v1.600M18.300 16.400v1.600M7.800 17.600h3.600" stroke="#241c0c" stroke-width="1.300"/></svg>
<svg style="left:148.5px;top:836px" width="24" height="24"><text x="1" y="16.400" style="font-family:'Liberation Serif',serif;font-size:22px;font-style:italic" fill="#22229c" stroke="#22229c" stroke-width=".5" transform="scale(1.150 1)">R</text><path d="M1.200 6.400C5 1.600 13 .600 20 1.600" stroke="#2a2aa4" stroke-width="2.200" fill="none" stroke-linecap="round"/></svg>
<svg style="left:177.5px;top:836px" width="24" height="24"><path d="M0 8.200h7.600M7.600 2.400V14.400M7.600 2.400H11M7.600 8.200H11M7.600 14.400H11" stroke="#3c3c14" stroke-width="1.200" fill="none"/><rect x="2.400" y="6.400" width="3.600" height="2.400" fill="#b8b878"/><rect x="10.800" y="0.4" width="7" height="3.800" fill="#e4e4b4" stroke="#a4a468" stroke-width=".5"/><path d="M10.800 4.2h7" stroke="#3c3c14" stroke-width="1.100"/><rect x="10.800" y="6.2" width="7" height="3.800" fill="#e4e4b4" stroke="#a4a468" stroke-width=".5"/><path d="M10.800 10.0h7" stroke="#3c3c14" stroke-width="1.100"/><rect x="10.800" y="12.2" width="7" height="3.800" fill="#e4e4b4" stroke="#a4a468" stroke-width=".5"/><path d="M10.800 16.0h7" stroke="#3c3c14" stroke-width="1.100"/></svg>
<div class="r" style="left:203px;top:833px;width:1px;height:23px;background:#8c9098;"></div>
<svg style="left:216px;top:835px" width="24" height="24"><path d="M3.600 8.400V5.400C3.600 2 9.800 2 9.800 5.400V8.400" fill="none" stroke="#5c6068" stroke-width="1.500"/><path d="M4.800 8.400V5.800C4.800 3.400 8.600 3.400 8.600 5.800V8.400" fill="none" stroke="#f4f4f4" stroke-width=".9"/><rect x="1.200" y="8" width="11" height="9.400" rx=".8" fill="url(#gLk)" stroke="#54585c" stroke-width=".9"/></svg>
<div class="r" style="left:239px;top:833px;width:1px;height:23px;background:#8c9098;"></div>
<svg style="left:248px;top:834px" width="24" height="24"><path d="M8.19 2.72L8.37 0.23L11.63 0.23L11.81 2.72L13.87 3.57L15.76 1.95L18.05 4.24L16.43 6.13L17.28 8.19L19.77 8.37L19.77 11.63L17.28 11.81L16.43 13.87L18.05 15.76L15.76 18.05L13.87 16.43L11.81 17.28L11.63 19.77L8.37 19.77L8.19 17.28L6.13 16.43L4.24 18.05L1.95 15.76L3.57 13.87L2.72 11.81L0.23 11.63L0.23 8.37L2.72 8.19L3.57 6.13L1.95 4.24L4.24 1.95L6.13 3.57Z" fill="url(#gGe)" stroke="#245c98" stroke-width=".5" stroke-linejoin="round"/><circle cx="10" cy="10" r="2.10" fill="#e8eef6"/></svg>
</body></html>
